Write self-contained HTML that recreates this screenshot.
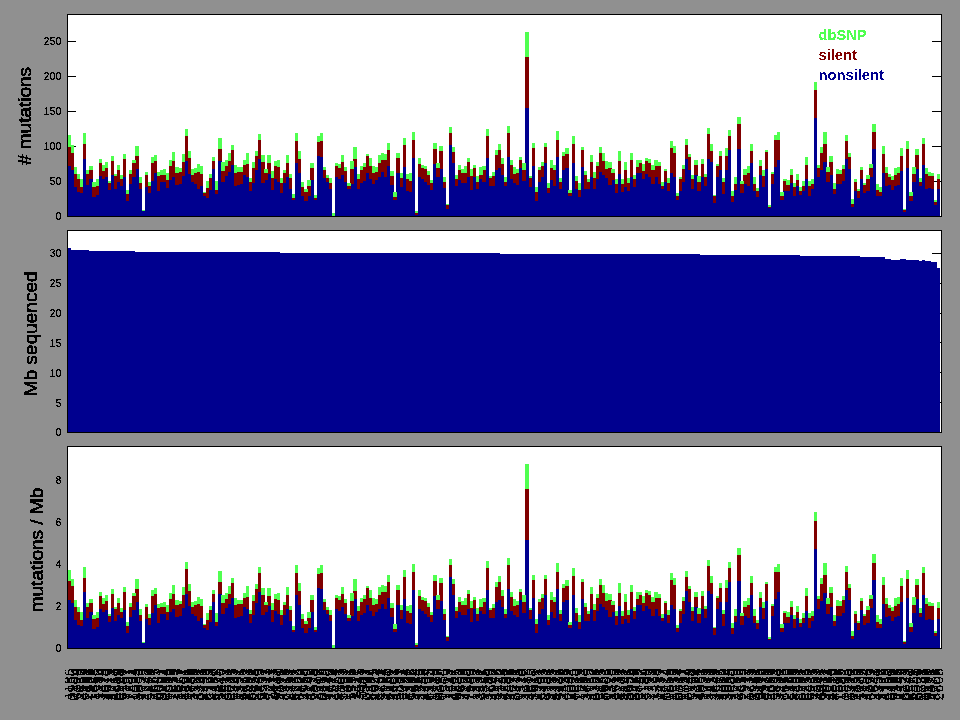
<!DOCTYPE html><html><head><meta charset="utf-8"><title>mutation rates</title>
<style>html,body{margin:0;padding:0;background:#909090;overflow:hidden}svg{display:block}text{font-family:"Liberation Sans",Arial,Helvetica,sans-serif;fill:#000;filter:url(#al)}.t{font-size:10px;letter-spacing:0.4385px;text-anchor:end;filter:url(#al2)}.yl{font-size:19px;text-anchor:middle;stroke:#000;stroke-width:0.5px}.lg{font-size:14.7px;font-weight:bold}.xl{font-size:14px;letter-spacing:0.35px;text-anchor:end;filter:url(#al)}</style></head><body>
<svg width="960" height="720" viewBox="0 0 960 720" shape-rendering="crispEdges">
<rect x="0" y="0" width="960" height="720" fill="#909090"/>
<rect x="67" y="14" width="875" height="203" fill="#fff"/>
<rect x="67" y="181" width="9" height="1" fill="#000"/>
<rect x="932" y="181" width="10" height="1" fill="#000"/>
<rect x="67" y="146" width="9" height="1" fill="#000"/>
<rect x="932" y="146" width="10" height="1" fill="#000"/>
<rect x="67" y="111" width="9" height="1" fill="#000"/>
<rect x="932" y="111" width="10" height="1" fill="#000"/>
<rect x="67" y="76" width="9" height="1" fill="#000"/>
<rect x="932" y="76" width="10" height="1" fill="#000"/>
<rect x="67" y="41" width="9" height="1" fill="#000"/>
<rect x="932" y="41" width="10" height="1" fill="#000"/>
<rect x="68" y="166" width="3" height="50" fill="#00008f"/>
<rect x="71" y="170" width="3" height="46" fill="#00008f"/>
<rect x="74" y="187" width="3" height="29" fill="#00008f"/>
<rect x="77" y="192" width="3" height="24" fill="#00008f"/>
<rect x="80" y="193" width="3" height="23" fill="#00008f"/>
<rect x="83" y="159" width="3" height="57" fill="#00008f"/>
<rect x="86" y="185" width="3" height="31" fill="#00008f"/>
<rect x="89" y="179" width="4" height="37" fill="#00008f"/>
<rect x="92" y="197" width="4" height="19" fill="#00008f"/>
<rect x="96" y="195" width="3" height="21" fill="#00008f"/>
<rect x="99" y="176" width="3" height="40" fill="#00008f"/>
<rect x="102" y="179" width="3" height="37" fill="#00008f"/>
<rect x="105" y="177" width="3" height="39" fill="#00008f"/>
<rect x="108" y="190" width="3" height="26" fill="#00008f"/>
<rect x="111" y="175" width="3" height="41" fill="#00008f"/>
<rect x="114" y="189" width="3" height="27" fill="#00008f"/>
<rect x="117" y="182" width="3" height="34" fill="#00008f"/>
<rect x="120" y="186" width="3" height="30" fill="#00008f"/>
<rect x="123" y="177" width="3" height="39" fill="#00008f"/>
<rect x="126" y="201" width="3" height="15" fill="#00008f"/>
<rect x="129" y="184" width="3" height="32" fill="#00008f"/>
<rect x="132" y="177" width="4" height="39" fill="#00008f"/>
<rect x="135" y="169" width="4" height="47" fill="#00008f"/>
<rect x="139" y="189" width="3" height="27" fill="#00008f"/>
<rect x="142" y="211" width="3" height="5" fill="#00008f"/>
<rect x="145" y="187" width="3" height="29" fill="#00008f"/>
<rect x="148" y="193" width="3" height="23" fill="#00008f"/>
<rect x="151" y="181" width="3" height="35" fill="#00008f"/>
<rect x="154" y="173" width="3" height="43" fill="#00008f"/>
<rect x="157" y="191" width="3" height="25" fill="#00008f"/>
<rect x="160" y="182" width="3" height="34" fill="#00008f"/>
<rect x="163" y="182" width="3" height="34" fill="#00008f"/>
<rect x="166" y="188" width="3" height="28" fill="#00008f"/>
<rect x="169" y="180" width="3" height="36" fill="#00008f"/>
<rect x="172" y="177" width="3" height="39" fill="#00008f"/>
<rect x="175" y="185" width="4" height="31" fill="#00008f"/>
<rect x="178" y="184" width="4" height="32" fill="#00008f"/>
<rect x="182" y="176" width="3" height="40" fill="#00008f"/>
<rect x="185" y="161" width="3" height="55" fill="#00008f"/>
<rect x="188" y="174" width="3" height="42" fill="#00008f"/>
<rect x="191" y="182" width="3" height="34" fill="#00008f"/>
<rect x="194" y="184" width="3" height="32" fill="#00008f"/>
<rect x="197" y="189" width="3" height="27" fill="#00008f"/>
<rect x="200" y="186" width="3" height="30" fill="#00008f"/>
<rect x="203" y="196" width="3" height="20" fill="#00008f"/>
<rect x="206" y="198" width="3" height="18" fill="#00008f"/>
<rect x="209" y="190" width="3" height="26" fill="#00008f"/>
<rect x="212" y="169" width="3" height="47" fill="#00008f"/>
<rect x="215" y="194" width="3" height="22" fill="#00008f"/>
<rect x="218" y="161" width="4" height="55" fill="#00008f"/>
<rect x="221" y="182" width="4" height="34" fill="#00008f"/>
<rect x="225" y="176" width="3" height="40" fill="#00008f"/>
<rect x="228" y="172" width="3" height="44" fill="#00008f"/>
<rect x="231" y="165" width="3" height="51" fill="#00008f"/>
<rect x="234" y="186" width="3" height="30" fill="#00008f"/>
<rect x="237" y="185" width="3" height="31" fill="#00008f"/>
<rect x="240" y="184" width="3" height="32" fill="#00008f"/>
<rect x="243" y="175" width="3" height="41" fill="#00008f"/>
<rect x="246" y="177" width="3" height="39" fill="#00008f"/>
<rect x="249" y="191" width="3" height="25" fill="#00008f"/>
<rect x="252" y="183" width="3" height="33" fill="#00008f"/>
<rect x="255" y="170" width="3" height="46" fill="#00008f"/>
<rect x="258" y="159" width="3" height="57" fill="#00008f"/>
<rect x="261" y="183" width="4" height="33" fill="#00008f"/>
<rect x="264" y="180" width="4" height="36" fill="#00008f"/>
<rect x="267" y="174" width="4" height="42" fill="#00008f"/>
<rect x="271" y="190" width="3" height="26" fill="#00008f"/>
<rect x="274" y="179" width="3" height="37" fill="#00008f"/>
<rect x="277" y="182" width="3" height="34" fill="#00008f"/>
<rect x="280" y="193" width="3" height="23" fill="#00008f"/>
<rect x="283" y="183" width="3" height="33" fill="#00008f"/>
<rect x="286" y="177" width="3" height="39" fill="#00008f"/>
<rect x="289" y="189" width="3" height="27" fill="#00008f"/>
<rect x="292" y="200" width="3" height="16" fill="#00008f"/>
<rect x="295" y="163" width="3" height="53" fill="#00008f"/>
<rect x="298" y="173" width="3" height="43" fill="#00008f"/>
<rect x="301" y="196" width="3" height="20" fill="#00008f"/>
<rect x="304" y="201" width="4" height="15" fill="#00008f"/>
<rect x="307" y="196" width="4" height="20" fill="#00008f"/>
<rect x="310" y="180" width="4" height="36" fill="#00008f"/>
<rect x="314" y="200" width="3" height="16" fill="#00008f"/>
<rect x="317" y="156" width="3" height="60" fill="#00008f"/>
<rect x="320" y="157" width="3" height="59" fill="#00008f"/>
<rect x="323" y="178" width="3" height="38" fill="#00008f"/>
<rect x="326" y="182" width="3" height="34" fill="#00008f"/>
<rect x="329" y="189" width="3" height="27" fill="#00008f"/>
<rect x="335" y="177" width="3" height="39" fill="#00008f"/>
<rect x="338" y="179" width="3" height="37" fill="#00008f"/>
<rect x="341" y="175" width="3" height="41" fill="#00008f"/>
<rect x="344" y="182" width="3" height="34" fill="#00008f"/>
<rect x="347" y="189" width="4" height="27" fill="#00008f"/>
<rect x="350" y="184" width="4" height="32" fill="#00008f"/>
<rect x="353" y="167" width="4" height="49" fill="#00008f"/>
<rect x="357" y="189" width="3" height="27" fill="#00008f"/>
<rect x="360" y="183" width="3" height="33" fill="#00008f"/>
<rect x="363" y="181" width="3" height="35" fill="#00008f"/>
<rect x="366" y="173" width="3" height="43" fill="#00008f"/>
<rect x="369" y="179" width="3" height="37" fill="#00008f"/>
<rect x="372" y="184" width="3" height="32" fill="#00008f"/>
<rect x="375" y="180" width="3" height="36" fill="#00008f"/>
<rect x="378" y="177" width="3" height="39" fill="#00008f"/>
<rect x="381" y="172" width="3" height="44" fill="#00008f"/>
<rect x="384" y="177" width="3" height="39" fill="#00008f"/>
<rect x="387" y="166" width="3" height="50" fill="#00008f"/>
<rect x="390" y="185" width="4" height="31" fill="#00008f"/>
<rect x="393" y="200" width="4" height="16" fill="#00008f"/>
<rect x="396" y="173" width="4" height="43" fill="#00008f"/>
<rect x="400" y="187" width="3" height="29" fill="#00008f"/>
<rect x="403" y="167" width="3" height="49" fill="#00008f"/>
<rect x="406" y="191" width="3" height="25" fill="#00008f"/>
<rect x="409" y="192" width="3" height="24" fill="#00008f"/>
<rect x="412" y="158" width="3" height="58" fill="#00008f"/>
<rect x="415" y="215" width="3" height="1" fill="#00008f"/>
<rect x="418" y="177" width="3" height="39" fill="#00008f"/>
<rect x="421" y="179" width="3" height="37" fill="#00008f"/>
<rect x="424" y="182" width="3" height="34" fill="#00008f"/>
<rect x="427" y="185" width="3" height="31" fill="#00008f"/>
<rect x="430" y="190" width="3" height="26" fill="#00008f"/>
<rect x="433" y="164" width="4" height="52" fill="#00008f"/>
<rect x="436" y="177" width="4" height="39" fill="#00008f"/>
<rect x="439" y="169" width="4" height="47" fill="#00008f"/>
<rect x="443" y="188" width="3" height="28" fill="#00008f"/>
<rect x="446" y="209" width="3" height="7" fill="#00008f"/>
<rect x="449" y="145" width="3" height="71" fill="#00008f"/>
<rect x="452" y="163" width="3" height="53" fill="#00008f"/>
<rect x="455" y="186" width="3" height="30" fill="#00008f"/>
<rect x="458" y="180" width="3" height="36" fill="#00008f"/>
<rect x="461" y="183" width="3" height="33" fill="#00008f"/>
<rect x="464" y="183" width="3" height="33" fill="#00008f"/>
<rect x="467" y="177" width="3" height="39" fill="#00008f"/>
<rect x="470" y="190" width="3" height="26" fill="#00008f"/>
<rect x="473" y="177" width="3" height="39" fill="#00008f"/>
<rect x="476" y="189" width="3" height="27" fill="#00008f"/>
<rect x="479" y="179" width="4" height="37" fill="#00008f"/>
<rect x="482" y="182" width="4" height="34" fill="#00008f"/>
<rect x="486" y="158" width="3" height="58" fill="#00008f"/>
<rect x="489" y="186" width="3" height="30" fill="#00008f"/>
<rect x="492" y="186" width="3" height="30" fill="#00008f"/>
<rect x="495" y="170" width="3" height="46" fill="#00008f"/>
<rect x="498" y="168" width="3" height="48" fill="#00008f"/>
<rect x="501" y="175" width="3" height="41" fill="#00008f"/>
<rect x="504" y="186" width="3" height="30" fill="#00008f"/>
<rect x="507" y="157" width="3" height="59" fill="#00008f"/>
<rect x="510" y="179" width="3" height="37" fill="#00008f"/>
<rect x="513" y="183" width="3" height="33" fill="#00008f"/>
<rect x="516" y="185" width="3" height="31" fill="#00008f"/>
<rect x="519" y="168" width="3" height="48" fill="#00008f"/>
<rect x="522" y="181" width="4" height="35" fill="#00008f"/>
<rect x="525" y="108" width="4" height="108" fill="#00008f"/>
<rect x="529" y="187" width="3" height="29" fill="#00008f"/>
<rect x="532" y="166" width="3" height="50" fill="#00008f"/>
<rect x="535" y="201" width="3" height="15" fill="#00008f"/>
<rect x="538" y="182" width="3" height="34" fill="#00008f"/>
<rect x="541" y="177" width="3" height="39" fill="#00008f"/>
<rect x="544" y="163" width="3" height="53" fill="#00008f"/>
<rect x="547" y="193" width="3" height="23" fill="#00008f"/>
<rect x="550" y="180" width="3" height="36" fill="#00008f"/>
<rect x="553" y="186" width="3" height="30" fill="#00008f"/>
<rect x="556" y="157" width="3" height="59" fill="#00008f"/>
<rect x="559" y="189" width="3" height="27" fill="#00008f"/>
<rect x="562" y="170" width="3" height="46" fill="#00008f"/>
<rect x="565" y="168" width="4" height="48" fill="#00008f"/>
<rect x="568" y="196" width="4" height="20" fill="#00008f"/>
<rect x="572" y="163" width="3" height="53" fill="#00008f"/>
<rect x="575" y="189" width="3" height="27" fill="#00008f"/>
<rect x="578" y="197" width="3" height="19" fill="#00008f"/>
<rect x="581" y="167" width="3" height="49" fill="#00008f"/>
<rect x="584" y="189" width="3" height="27" fill="#00008f"/>
<rect x="587" y="189" width="3" height="27" fill="#00008f"/>
<rect x="590" y="177" width="3" height="39" fill="#00008f"/>
<rect x="593" y="189" width="3" height="27" fill="#00008f"/>
<rect x="596" y="179" width="3" height="37" fill="#00008f"/>
<rect x="599" y="172" width="3" height="44" fill="#00008f"/>
<rect x="602" y="175" width="3" height="41" fill="#00008f"/>
<rect x="605" y="178" width="3" height="38" fill="#00008f"/>
<rect x="608" y="185" width="4" height="31" fill="#00008f"/>
<rect x="611" y="180" width="4" height="36" fill="#00008f"/>
<rect x="615" y="193" width="3" height="23" fill="#00008f"/>
<rect x="618" y="174" width="3" height="42" fill="#00008f"/>
<rect x="621" y="192" width="3" height="24" fill="#00008f"/>
<rect x="624" y="187" width="3" height="29" fill="#00008f"/>
<rect x="627" y="191" width="3" height="25" fill="#00008f"/>
<rect x="630" y="177" width="3" height="39" fill="#00008f"/>
<rect x="633" y="187" width="3" height="29" fill="#00008f"/>
<rect x="636" y="173" width="3" height="43" fill="#00008f"/>
<rect x="639" y="173" width="3" height="43" fill="#00008f"/>
<rect x="642" y="179" width="3" height="37" fill="#00008f"/>
<rect x="645" y="174" width="3" height="42" fill="#00008f"/>
<rect x="648" y="177" width="3" height="39" fill="#00008f"/>
<rect x="651" y="184" width="4" height="32" fill="#00008f"/>
<rect x="654" y="177" width="4" height="39" fill="#00008f"/>
<rect x="658" y="184" width="3" height="32" fill="#00008f"/>
<rect x="661" y="189" width="3" height="27" fill="#00008f"/>
<rect x="664" y="182" width="3" height="34" fill="#00008f"/>
<rect x="667" y="191" width="3" height="25" fill="#00008f"/>
<rect x="670" y="173" width="3" height="43" fill="#00008f"/>
<rect x="673" y="177" width="3" height="39" fill="#00008f"/>
<rect x="676" y="200" width="3" height="16" fill="#00008f"/>
<rect x="679" y="191" width="3" height="25" fill="#00008f"/>
<rect x="682" y="182" width="3" height="34" fill="#00008f"/>
<rect x="685" y="159" width="3" height="57" fill="#00008f"/>
<rect x="688" y="170" width="3" height="46" fill="#00008f"/>
<rect x="691" y="189" width="3" height="27" fill="#00008f"/>
<rect x="694" y="175" width="4" height="41" fill="#00008f"/>
<rect x="697" y="191" width="4" height="25" fill="#00008f"/>
<rect x="701" y="177" width="3" height="39" fill="#00008f"/>
<rect x="704" y="186" width="3" height="30" fill="#00008f"/>
<rect x="707" y="159" width="3" height="57" fill="#00008f"/>
<rect x="710" y="162" width="3" height="54" fill="#00008f"/>
<rect x="713" y="203" width="3" height="13" fill="#00008f"/>
<rect x="716" y="177" width="3" height="39" fill="#00008f"/>
<rect x="719" y="170" width="3" height="46" fill="#00008f"/>
<rect x="722" y="194" width="3" height="22" fill="#00008f"/>
<rect x="725" y="170" width="3" height="46" fill="#00008f"/>
<rect x="728" y="150" width="3" height="66" fill="#00008f"/>
<rect x="731" y="202" width="3" height="14" fill="#00008f"/>
<rect x="734" y="190" width="3" height="26" fill="#00008f"/>
<rect x="737" y="149" width="4" height="67" fill="#00008f"/>
<rect x="740" y="193" width="4" height="23" fill="#00008f"/>
<rect x="743" y="184" width="4" height="32" fill="#00008f"/>
<rect x="747" y="186" width="3" height="30" fill="#00008f"/>
<rect x="750" y="163" width="3" height="53" fill="#00008f"/>
<rect x="753" y="191" width="3" height="25" fill="#00008f"/>
<rect x="756" y="197" width="3" height="19" fill="#00008f"/>
<rect x="759" y="175" width="3" height="41" fill="#00008f"/>
<rect x="762" y="187" width="3" height="29" fill="#00008f"/>
<rect x="765" y="169" width="3" height="47" fill="#00008f"/>
<rect x="768" y="208" width="3" height="8" fill="#00008f"/>
<rect x="771" y="184" width="3" height="32" fill="#00008f"/>
<rect x="774" y="167" width="3" height="49" fill="#00008f"/>
<rect x="777" y="160" width="3" height="56" fill="#00008f"/>
<rect x="780" y="200" width="4" height="16" fill="#00008f"/>
<rect x="783" y="191" width="4" height="25" fill="#00008f"/>
<rect x="786" y="191" width="4" height="25" fill="#00008f"/>
<rect x="790" y="183" width="3" height="33" fill="#00008f"/>
<rect x="793" y="196" width="3" height="20" fill="#00008f"/>
<rect x="796" y="186" width="3" height="30" fill="#00008f"/>
<rect x="799" y="195" width="3" height="21" fill="#00008f"/>
<rect x="802" y="191" width="3" height="25" fill="#00008f"/>
<rect x="805" y="179" width="3" height="37" fill="#00008f"/>
<rect x="808" y="196" width="3" height="20" fill="#00008f"/>
<rect x="811" y="189" width="3" height="27" fill="#00008f"/>
<rect x="814" y="118" width="3" height="98" fill="#00008f"/>
<rect x="817" y="177" width="3" height="39" fill="#00008f"/>
<rect x="820" y="170" width="3" height="46" fill="#00008f"/>
<rect x="823" y="162" width="4" height="54" fill="#00008f"/>
<rect x="826" y="182" width="4" height="34" fill="#00008f"/>
<rect x="829" y="175" width="4" height="41" fill="#00008f"/>
<rect x="833" y="194" width="3" height="22" fill="#00008f"/>
<rect x="836" y="184" width="3" height="32" fill="#00008f"/>
<rect x="839" y="184" width="3" height="32" fill="#00008f"/>
<rect x="842" y="181" width="3" height="35" fill="#00008f"/>
<rect x="845" y="159" width="3" height="57" fill="#00008f"/>
<rect x="848" y="169" width="3" height="47" fill="#00008f"/>
<rect x="851" y="207" width="3" height="9" fill="#00008f"/>
<rect x="854" y="191" width="3" height="25" fill="#00008f"/>
<rect x="857" y="198" width="3" height="18" fill="#00008f"/>
<rect x="860" y="179" width="3" height="37" fill="#00008f"/>
<rect x="863" y="193" width="3" height="23" fill="#00008f"/>
<rect x="866" y="191" width="4" height="25" fill="#00008f"/>
<rect x="869" y="177" width="4" height="39" fill="#00008f"/>
<rect x="872" y="149" width="4" height="67" fill="#00008f"/>
<rect x="876" y="196" width="3" height="20" fill="#00008f"/>
<rect x="879" y="196" width="3" height="20" fill="#00008f"/>
<rect x="882" y="173" width="3" height="43" fill="#00008f"/>
<rect x="885" y="186" width="3" height="30" fill="#00008f"/>
<rect x="888" y="185" width="3" height="31" fill="#00008f"/>
<rect x="891" y="190" width="3" height="26" fill="#00008f"/>
<rect x="894" y="186" width="3" height="30" fill="#00008f"/>
<rect x="897" y="185" width="3" height="31" fill="#00008f"/>
<rect x="900" y="171" width="3" height="45" fill="#00008f"/>
<rect x="903" y="212" width="3" height="4" fill="#00008f"/>
<rect x="906" y="168" width="3" height="48" fill="#00008f"/>
<rect x="909" y="201" width="4" height="15" fill="#00008f"/>
<rect x="912" y="182" width="4" height="34" fill="#00008f"/>
<rect x="915" y="169" width="4" height="47" fill="#00008f"/>
<rect x="919" y="186" width="3" height="30" fill="#00008f"/>
<rect x="922" y="165" width="3" height="51" fill="#00008f"/>
<rect x="925" y="189" width="3" height="27" fill="#00008f"/>
<rect x="928" y="188" width="3" height="28" fill="#00008f"/>
<rect x="931" y="189" width="3" height="27" fill="#00008f"/>
<rect x="934" y="205" width="3" height="11" fill="#00008f"/>
<rect x="937" y="189" width="3" height="27" fill="#00008f"/>
<rect x="68" y="147" width="3" height="19" fill="#800000"/>
<rect x="71" y="153" width="3" height="17" fill="#800000"/>
<rect x="74" y="174" width="3" height="13" fill="#800000"/>
<rect x="77" y="179" width="3" height="13" fill="#800000"/>
<rect x="80" y="187" width="3" height="6" fill="#800000"/>
<rect x="83" y="144" width="3" height="15" fill="#800000"/>
<rect x="86" y="174" width="3" height="11" fill="#800000"/>
<rect x="89" y="170" width="4" height="9" fill="#800000"/>
<rect x="92" y="187" width="4" height="10" fill="#800000"/>
<rect x="96" y="186" width="3" height="9" fill="#800000"/>
<rect x="99" y="163" width="3" height="13" fill="#800000"/>
<rect x="102" y="171" width="3" height="8" fill="#800000"/>
<rect x="105" y="168" width="3" height="9" fill="#800000"/>
<rect x="108" y="183" width="3" height="7" fill="#800000"/>
<rect x="111" y="161" width="3" height="14" fill="#800000"/>
<rect x="114" y="176" width="3" height="13" fill="#800000"/>
<rect x="117" y="170" width="3" height="12" fill="#800000"/>
<rect x="120" y="179" width="3" height="7" fill="#800000"/>
<rect x="123" y="159" width="3" height="18" fill="#800000"/>
<rect x="126" y="194" width="3" height="7" fill="#800000"/>
<rect x="129" y="174" width="3" height="10" fill="#800000"/>
<rect x="132" y="163" width="4" height="14" fill="#800000"/>
<rect x="135" y="156" width="4" height="13" fill="#800000"/>
<rect x="139" y="183" width="3" height="6" fill="#800000"/>
<rect x="145" y="175" width="3" height="12" fill="#800000"/>
<rect x="148" y="186" width="3" height="7" fill="#800000"/>
<rect x="151" y="163" width="3" height="18" fill="#800000"/>
<rect x="154" y="161" width="3" height="12" fill="#800000"/>
<rect x="157" y="176" width="3" height="15" fill="#800000"/>
<rect x="160" y="175" width="3" height="7" fill="#800000"/>
<rect x="163" y="175" width="3" height="7" fill="#800000"/>
<rect x="166" y="180" width="3" height="8" fill="#800000"/>
<rect x="169" y="166" width="3" height="14" fill="#800000"/>
<rect x="172" y="161" width="3" height="16" fill="#800000"/>
<rect x="175" y="173" width="4" height="12" fill="#800000"/>
<rect x="178" y="172" width="4" height="12" fill="#800000"/>
<rect x="182" y="162" width="3" height="14" fill="#800000"/>
<rect x="185" y="136" width="3" height="25" fill="#800000"/>
<rect x="188" y="158" width="3" height="16" fill="#800000"/>
<rect x="191" y="175" width="3" height="7" fill="#800000"/>
<rect x="194" y="173" width="3" height="11" fill="#800000"/>
<rect x="197" y="172" width="3" height="17" fill="#800000"/>
<rect x="200" y="174" width="3" height="12" fill="#800000"/>
<rect x="203" y="193" width="3" height="3" fill="#800000"/>
<rect x="206" y="188" width="3" height="10" fill="#800000"/>
<rect x="209" y="178" width="3" height="12" fill="#800000"/>
<rect x="212" y="161" width="3" height="8" fill="#800000"/>
<rect x="215" y="190" width="3" height="4" fill="#800000"/>
<rect x="218" y="149" width="4" height="12" fill="#800000"/>
<rect x="221" y="171" width="4" height="11" fill="#800000"/>
<rect x="225" y="166" width="3" height="10" fill="#800000"/>
<rect x="228" y="161" width="3" height="11" fill="#800000"/>
<rect x="231" y="150" width="3" height="15" fill="#800000"/>
<rect x="234" y="173" width="3" height="13" fill="#800000"/>
<rect x="237" y="172" width="3" height="13" fill="#800000"/>
<rect x="240" y="172" width="3" height="12" fill="#800000"/>
<rect x="243" y="165" width="3" height="10" fill="#800000"/>
<rect x="246" y="164" width="3" height="13" fill="#800000"/>
<rect x="249" y="182" width="3" height="9" fill="#800000"/>
<rect x="252" y="168" width="3" height="15" fill="#800000"/>
<rect x="255" y="156" width="3" height="14" fill="#800000"/>
<rect x="258" y="140" width="3" height="19" fill="#800000"/>
<rect x="261" y="162" width="4" height="21" fill="#800000"/>
<rect x="264" y="173" width="4" height="7" fill="#800000"/>
<rect x="267" y="163" width="4" height="11" fill="#800000"/>
<rect x="271" y="178" width="3" height="12" fill="#800000"/>
<rect x="274" y="166" width="3" height="13" fill="#800000"/>
<rect x="277" y="167" width="3" height="15" fill="#800000"/>
<rect x="280" y="183" width="3" height="10" fill="#800000"/>
<rect x="283" y="173" width="3" height="10" fill="#800000"/>
<rect x="286" y="163" width="3" height="14" fill="#800000"/>
<rect x="289" y="178" width="3" height="11" fill="#800000"/>
<rect x="292" y="198" width="3" height="2" fill="#800000"/>
<rect x="295" y="141" width="3" height="22" fill="#800000"/>
<rect x="298" y="159" width="3" height="14" fill="#800000"/>
<rect x="301" y="187" width="3" height="9" fill="#800000"/>
<rect x="304" y="192" width="4" height="9" fill="#800000"/>
<rect x="307" y="186" width="4" height="10" fill="#800000"/>
<rect x="310" y="168" width="4" height="12" fill="#800000"/>
<rect x="314" y="198" width="3" height="2" fill="#800000"/>
<rect x="317" y="142" width="3" height="14" fill="#800000"/>
<rect x="320" y="141" width="3" height="16" fill="#800000"/>
<rect x="323" y="170" width="3" height="8" fill="#800000"/>
<rect x="326" y="178" width="3" height="4" fill="#800000"/>
<rect x="329" y="183" width="3" height="6" fill="#800000"/>
<rect x="335" y="166" width="3" height="11" fill="#800000"/>
<rect x="338" y="168" width="3" height="11" fill="#800000"/>
<rect x="341" y="162" width="3" height="13" fill="#800000"/>
<rect x="344" y="171" width="3" height="11" fill="#800000"/>
<rect x="347" y="186" width="4" height="3" fill="#800000"/>
<rect x="350" y="169" width="4" height="15" fill="#800000"/>
<rect x="353" y="159" width="4" height="8" fill="#800000"/>
<rect x="357" y="179" width="3" height="10" fill="#800000"/>
<rect x="360" y="170" width="3" height="13" fill="#800000"/>
<rect x="363" y="167" width="3" height="14" fill="#800000"/>
<rect x="366" y="156" width="3" height="17" fill="#800000"/>
<rect x="369" y="166" width="3" height="13" fill="#800000"/>
<rect x="372" y="173" width="3" height="11" fill="#800000"/>
<rect x="375" y="172" width="3" height="8" fill="#800000"/>
<rect x="378" y="163" width="3" height="14" fill="#800000"/>
<rect x="381" y="160" width="3" height="12" fill="#800000"/>
<rect x="384" y="160" width="3" height="17" fill="#800000"/>
<rect x="387" y="150" width="3" height="16" fill="#800000"/>
<rect x="390" y="176" width="4" height="9" fill="#800000"/>
<rect x="393" y="197" width="4" height="3" fill="#800000"/>
<rect x="396" y="158" width="4" height="15" fill="#800000"/>
<rect x="400" y="178" width="3" height="9" fill="#800000"/>
<rect x="403" y="145" width="3" height="22" fill="#800000"/>
<rect x="406" y="179" width="3" height="12" fill="#800000"/>
<rect x="409" y="181" width="3" height="11" fill="#800000"/>
<rect x="412" y="140" width="3" height="18" fill="#800000"/>
<rect x="415" y="213" width="3" height="2" fill="#800000"/>
<rect x="418" y="164" width="3" height="13" fill="#800000"/>
<rect x="421" y="168" width="3" height="11" fill="#800000"/>
<rect x="424" y="169" width="3" height="13" fill="#800000"/>
<rect x="427" y="175" width="3" height="10" fill="#800000"/>
<rect x="430" y="183" width="3" height="7" fill="#800000"/>
<rect x="433" y="149" width="4" height="15" fill="#800000"/>
<rect x="436" y="168" width="4" height="9" fill="#800000"/>
<rect x="439" y="151" width="4" height="18" fill="#800000"/>
<rect x="443" y="182" width="3" height="6" fill="#800000"/>
<rect x="446" y="205" width="3" height="4" fill="#800000"/>
<rect x="449" y="133" width="3" height="12" fill="#800000"/>
<rect x="452" y="152" width="3" height="11" fill="#800000"/>
<rect x="455" y="179" width="3" height="7" fill="#800000"/>
<rect x="458" y="170" width="3" height="10" fill="#800000"/>
<rect x="461" y="173" width="3" height="10" fill="#800000"/>
<rect x="464" y="173" width="3" height="10" fill="#800000"/>
<rect x="467" y="162" width="3" height="15" fill="#800000"/>
<rect x="470" y="176" width="3" height="14" fill="#800000"/>
<rect x="473" y="168" width="3" height="9" fill="#800000"/>
<rect x="476" y="182" width="3" height="7" fill="#800000"/>
<rect x="479" y="175" width="4" height="4" fill="#800000"/>
<rect x="482" y="170" width="4" height="12" fill="#800000"/>
<rect x="486" y="136" width="3" height="22" fill="#800000"/>
<rect x="489" y="178" width="3" height="8" fill="#800000"/>
<rect x="492" y="176" width="3" height="10" fill="#800000"/>
<rect x="495" y="155" width="3" height="15" fill="#800000"/>
<rect x="498" y="150" width="3" height="18" fill="#800000"/>
<rect x="501" y="164" width="3" height="11" fill="#800000"/>
<rect x="504" y="182" width="3" height="4" fill="#800000"/>
<rect x="507" y="133" width="3" height="24" fill="#800000"/>
<rect x="510" y="165" width="3" height="14" fill="#800000"/>
<rect x="513" y="174" width="3" height="9" fill="#800000"/>
<rect x="516" y="173" width="3" height="12" fill="#800000"/>
<rect x="519" y="160" width="3" height="8" fill="#800000"/>
<rect x="522" y="170" width="4" height="11" fill="#800000"/>
<rect x="525" y="57" width="4" height="51" fill="#800000"/>
<rect x="529" y="178" width="3" height="9" fill="#800000"/>
<rect x="532" y="148" width="3" height="18" fill="#800000"/>
<rect x="535" y="192" width="3" height="9" fill="#800000"/>
<rect x="538" y="170" width="3" height="12" fill="#800000"/>
<rect x="541" y="166" width="3" height="11" fill="#800000"/>
<rect x="544" y="147" width="3" height="16" fill="#800000"/>
<rect x="547" y="188" width="3" height="5" fill="#800000"/>
<rect x="550" y="168" width="3" height="12" fill="#800000"/>
<rect x="553" y="170" width="3" height="16" fill="#800000"/>
<rect x="556" y="140" width="3" height="17" fill="#800000"/>
<rect x="559" y="182" width="3" height="7" fill="#800000"/>
<rect x="562" y="156" width="3" height="14" fill="#800000"/>
<rect x="565" y="154" width="4" height="14" fill="#800000"/>
<rect x="568" y="193" width="4" height="3" fill="#800000"/>
<rect x="572" y="144" width="3" height="19" fill="#800000"/>
<rect x="575" y="181" width="3" height="8" fill="#800000"/>
<rect x="578" y="190" width="3" height="7" fill="#800000"/>
<rect x="581" y="150" width="3" height="17" fill="#800000"/>
<rect x="584" y="175" width="3" height="14" fill="#800000"/>
<rect x="587" y="182" width="3" height="7" fill="#800000"/>
<rect x="590" y="162" width="3" height="15" fill="#800000"/>
<rect x="593" y="178" width="3" height="11" fill="#800000"/>
<rect x="596" y="166" width="3" height="13" fill="#800000"/>
<rect x="599" y="153" width="3" height="19" fill="#800000"/>
<rect x="602" y="161" width="3" height="14" fill="#800000"/>
<rect x="605" y="169" width="3" height="9" fill="#800000"/>
<rect x="608" y="168" width="4" height="17" fill="#800000"/>
<rect x="611" y="173" width="4" height="7" fill="#800000"/>
<rect x="615" y="184" width="3" height="9" fill="#800000"/>
<rect x="618" y="161" width="3" height="13" fill="#800000"/>
<rect x="621" y="184" width="3" height="8" fill="#800000"/>
<rect x="624" y="170" width="3" height="17" fill="#800000"/>
<rect x="627" y="183" width="3" height="8" fill="#800000"/>
<rect x="630" y="160" width="3" height="17" fill="#800000"/>
<rect x="633" y="179" width="3" height="8" fill="#800000"/>
<rect x="636" y="167" width="3" height="6" fill="#800000"/>
<rect x="639" y="163" width="3" height="10" fill="#800000"/>
<rect x="642" y="171" width="3" height="8" fill="#800000"/>
<rect x="645" y="161" width="3" height="13" fill="#800000"/>
<rect x="648" y="163" width="3" height="14" fill="#800000"/>
<rect x="651" y="170" width="4" height="14" fill="#800000"/>
<rect x="654" y="166" width="4" height="11" fill="#800000"/>
<rect x="658" y="166" width="3" height="18" fill="#800000"/>
<rect x="661" y="186" width="3" height="3" fill="#800000"/>
<rect x="664" y="171" width="3" height="11" fill="#800000"/>
<rect x="667" y="183" width="3" height="8" fill="#800000"/>
<rect x="670" y="148" width="3" height="25" fill="#800000"/>
<rect x="673" y="153" width="3" height="24" fill="#800000"/>
<rect x="676" y="196" width="3" height="4" fill="#800000"/>
<rect x="679" y="179" width="3" height="12" fill="#800000"/>
<rect x="682" y="169" width="3" height="13" fill="#800000"/>
<rect x="685" y="145" width="3" height="14" fill="#800000"/>
<rect x="688" y="157" width="3" height="13" fill="#800000"/>
<rect x="691" y="179" width="3" height="10" fill="#800000"/>
<rect x="694" y="165" width="4" height="10" fill="#800000"/>
<rect x="697" y="182" width="4" height="9" fill="#800000"/>
<rect x="701" y="164" width="3" height="13" fill="#800000"/>
<rect x="704" y="177" width="3" height="9" fill="#800000"/>
<rect x="707" y="134" width="3" height="25" fill="#800000"/>
<rect x="710" y="151" width="3" height="11" fill="#800000"/>
<rect x="713" y="196" width="3" height="7" fill="#800000"/>
<rect x="716" y="166" width="3" height="11" fill="#800000"/>
<rect x="719" y="156" width="3" height="14" fill="#800000"/>
<rect x="722" y="182" width="3" height="12" fill="#800000"/>
<rect x="725" y="156" width="3" height="14" fill="#800000"/>
<rect x="728" y="136" width="3" height="14" fill="#800000"/>
<rect x="731" y="196" width="3" height="6" fill="#800000"/>
<rect x="734" y="184" width="3" height="6" fill="#800000"/>
<rect x="737" y="124" width="4" height="25" fill="#800000"/>
<rect x="740" y="184" width="4" height="9" fill="#800000"/>
<rect x="743" y="175" width="4" height="9" fill="#800000"/>
<rect x="747" y="173" width="3" height="13" fill="#800000"/>
<rect x="750" y="151" width="3" height="12" fill="#800000"/>
<rect x="753" y="184" width="3" height="7" fill="#800000"/>
<rect x="756" y="191" width="3" height="6" fill="#800000"/>
<rect x="759" y="166" width="3" height="9" fill="#800000"/>
<rect x="762" y="176" width="3" height="11" fill="#800000"/>
<rect x="765" y="152" width="3" height="17" fill="#800000"/>
<rect x="768" y="207" width="3" height="1" fill="#800000"/>
<rect x="771" y="174" width="3" height="10" fill="#800000"/>
<rect x="774" y="140" width="3" height="27" fill="#800000"/>
<rect x="777" y="140" width="3" height="20" fill="#800000"/>
<rect x="780" y="196" width="4" height="4" fill="#800000"/>
<rect x="783" y="181" width="4" height="10" fill="#800000"/>
<rect x="786" y="185" width="4" height="6" fill="#800000"/>
<rect x="790" y="175" width="3" height="8" fill="#800000"/>
<rect x="793" y="187" width="3" height="9" fill="#800000"/>
<rect x="796" y="180" width="3" height="6" fill="#800000"/>
<rect x="799" y="191" width="3" height="4" fill="#800000"/>
<rect x="802" y="186" width="3" height="5" fill="#800000"/>
<rect x="805" y="165" width="3" height="14" fill="#800000"/>
<rect x="808" y="186" width="3" height="10" fill="#800000"/>
<rect x="811" y="184" width="3" height="5" fill="#800000"/>
<rect x="814" y="90" width="3" height="28" fill="#800000"/>
<rect x="817" y="168" width="3" height="9" fill="#800000"/>
<rect x="820" y="153" width="3" height="17" fill="#800000"/>
<rect x="823" y="144" width="4" height="18" fill="#800000"/>
<rect x="826" y="172" width="4" height="10" fill="#800000"/>
<rect x="829" y="162" width="4" height="13" fill="#800000"/>
<rect x="833" y="189" width="3" height="5" fill="#800000"/>
<rect x="836" y="174" width="3" height="10" fill="#800000"/>
<rect x="839" y="174" width="3" height="10" fill="#800000"/>
<rect x="842" y="169" width="3" height="12" fill="#800000"/>
<rect x="845" y="141" width="3" height="18" fill="#800000"/>
<rect x="848" y="157" width="3" height="12" fill="#800000"/>
<rect x="851" y="204" width="3" height="3" fill="#800000"/>
<rect x="854" y="182" width="3" height="9" fill="#800000"/>
<rect x="857" y="191" width="3" height="7" fill="#800000"/>
<rect x="860" y="170" width="3" height="9" fill="#800000"/>
<rect x="863" y="185" width="3" height="8" fill="#800000"/>
<rect x="866" y="179" width="4" height="12" fill="#800000"/>
<rect x="869" y="168" width="4" height="9" fill="#800000"/>
<rect x="872" y="132" width="4" height="17" fill="#800000"/>
<rect x="876" y="190" width="3" height="6" fill="#800000"/>
<rect x="879" y="192" width="3" height="4" fill="#800000"/>
<rect x="882" y="154" width="3" height="19" fill="#800000"/>
<rect x="885" y="173" width="3" height="13" fill="#800000"/>
<rect x="888" y="177" width="3" height="8" fill="#800000"/>
<rect x="891" y="180" width="3" height="10" fill="#800000"/>
<rect x="894" y="175" width="3" height="11" fill="#800000"/>
<rect x="897" y="173" width="3" height="12" fill="#800000"/>
<rect x="900" y="156" width="3" height="15" fill="#800000"/>
<rect x="903" y="210" width="3" height="2" fill="#800000"/>
<rect x="906" y="149" width="3" height="19" fill="#800000"/>
<rect x="909" y="196" width="4" height="5" fill="#800000"/>
<rect x="912" y="174" width="4" height="8" fill="#800000"/>
<rect x="915" y="155" width="4" height="14" fill="#800000"/>
<rect x="919" y="182" width="3" height="4" fill="#800000"/>
<rect x="922" y="144" width="3" height="21" fill="#800000"/>
<rect x="925" y="174" width="3" height="15" fill="#800000"/>
<rect x="928" y="176" width="3" height="12" fill="#800000"/>
<rect x="931" y="176" width="3" height="13" fill="#800000"/>
<rect x="934" y="202" width="3" height="3" fill="#800000"/>
<rect x="937" y="179" width="3" height="10" fill="#800000"/>
<rect x="68" y="135" width="3" height="12" fill="#50ff50"/>
<rect x="71" y="145" width="3" height="8" fill="#50ff50"/>
<rect x="74" y="167" width="3" height="7" fill="#50ff50"/>
<rect x="77" y="174" width="3" height="5" fill="#50ff50"/>
<rect x="80" y="179" width="3" height="8" fill="#50ff50"/>
<rect x="83" y="133" width="3" height="11" fill="#50ff50"/>
<rect x="86" y="170" width="3" height="4" fill="#50ff50"/>
<rect x="89" y="166" width="4" height="4" fill="#50ff50"/>
<rect x="92" y="182" width="4" height="5" fill="#50ff50"/>
<rect x="96" y="179" width="3" height="7" fill="#50ff50"/>
<rect x="99" y="159" width="3" height="4" fill="#50ff50"/>
<rect x="102" y="165" width="3" height="6" fill="#50ff50"/>
<rect x="105" y="162" width="3" height="6" fill="#50ff50"/>
<rect x="108" y="181" width="3" height="2" fill="#50ff50"/>
<rect x="111" y="156" width="3" height="5" fill="#50ff50"/>
<rect x="114" y="174" width="3" height="2" fill="#50ff50"/>
<rect x="117" y="165" width="3" height="5" fill="#50ff50"/>
<rect x="120" y="175" width="3" height="4" fill="#50ff50"/>
<rect x="123" y="154" width="3" height="5" fill="#50ff50"/>
<rect x="126" y="190" width="3" height="4" fill="#50ff50"/>
<rect x="129" y="170" width="3" height="4" fill="#50ff50"/>
<rect x="132" y="160" width="4" height="3" fill="#50ff50"/>
<rect x="135" y="146" width="4" height="10" fill="#50ff50"/>
<rect x="139" y="177" width="3" height="6" fill="#50ff50"/>
<rect x="142" y="210" width="3" height="1" fill="#50ff50"/>
<rect x="145" y="172" width="3" height="3" fill="#50ff50"/>
<rect x="148" y="182" width="3" height="4" fill="#50ff50"/>
<rect x="151" y="157" width="3" height="6" fill="#50ff50"/>
<rect x="154" y="155" width="3" height="6" fill="#50ff50"/>
<rect x="157" y="172" width="3" height="4" fill="#50ff50"/>
<rect x="160" y="170" width="3" height="5" fill="#50ff50"/>
<rect x="163" y="169" width="3" height="6" fill="#50ff50"/>
<rect x="166" y="173" width="3" height="7" fill="#50ff50"/>
<rect x="169" y="160" width="3" height="6" fill="#50ff50"/>
<rect x="172" y="152" width="3" height="9" fill="#50ff50"/>
<rect x="175" y="167" width="4" height="6" fill="#50ff50"/>
<rect x="178" y="168" width="4" height="4" fill="#50ff50"/>
<rect x="182" y="154" width="3" height="8" fill="#50ff50"/>
<rect x="185" y="129" width="3" height="7" fill="#50ff50"/>
<rect x="188" y="151" width="3" height="7" fill="#50ff50"/>
<rect x="191" y="169" width="3" height="6" fill="#50ff50"/>
<rect x="194" y="168" width="3" height="5" fill="#50ff50"/>
<rect x="197" y="164" width="3" height="8" fill="#50ff50"/>
<rect x="200" y="166" width="3" height="8" fill="#50ff50"/>
<rect x="203" y="192" width="3" height="1" fill="#50ff50"/>
<rect x="206" y="181" width="3" height="7" fill="#50ff50"/>
<rect x="209" y="174" width="3" height="4" fill="#50ff50"/>
<rect x="212" y="157" width="3" height="4" fill="#50ff50"/>
<rect x="215" y="181" width="3" height="9" fill="#50ff50"/>
<rect x="218" y="138" width="4" height="11" fill="#50ff50"/>
<rect x="221" y="162" width="4" height="9" fill="#50ff50"/>
<rect x="225" y="160" width="3" height="6" fill="#50ff50"/>
<rect x="228" y="153" width="3" height="8" fill="#50ff50"/>
<rect x="231" y="145" width="3" height="5" fill="#50ff50"/>
<rect x="234" y="165" width="3" height="8" fill="#50ff50"/>
<rect x="237" y="167" width="3" height="5" fill="#50ff50"/>
<rect x="240" y="167" width="3" height="5" fill="#50ff50"/>
<rect x="243" y="160" width="3" height="5" fill="#50ff50"/>
<rect x="246" y="153" width="3" height="11" fill="#50ff50"/>
<rect x="249" y="178" width="3" height="4" fill="#50ff50"/>
<rect x="252" y="162" width="3" height="6" fill="#50ff50"/>
<rect x="255" y="151" width="3" height="5" fill="#50ff50"/>
<rect x="258" y="134" width="3" height="6" fill="#50ff50"/>
<rect x="261" y="155" width="4" height="7" fill="#50ff50"/>
<rect x="264" y="169" width="4" height="4" fill="#50ff50"/>
<rect x="267" y="155" width="4" height="8" fill="#50ff50"/>
<rect x="271" y="171" width="3" height="7" fill="#50ff50"/>
<rect x="274" y="161" width="3" height="5" fill="#50ff50"/>
<rect x="277" y="160" width="3" height="7" fill="#50ff50"/>
<rect x="280" y="178" width="3" height="5" fill="#50ff50"/>
<rect x="283" y="170" width="3" height="3" fill="#50ff50"/>
<rect x="286" y="155" width="3" height="8" fill="#50ff50"/>
<rect x="289" y="174" width="3" height="4" fill="#50ff50"/>
<rect x="292" y="194" width="3" height="4" fill="#50ff50"/>
<rect x="295" y="133" width="3" height="8" fill="#50ff50"/>
<rect x="298" y="151" width="3" height="8" fill="#50ff50"/>
<rect x="301" y="182" width="3" height="5" fill="#50ff50"/>
<rect x="304" y="189" width="4" height="3" fill="#50ff50"/>
<rect x="307" y="180" width="4" height="6" fill="#50ff50"/>
<rect x="310" y="163" width="4" height="5" fill="#50ff50"/>
<rect x="314" y="195" width="3" height="3" fill="#50ff50"/>
<rect x="317" y="136" width="3" height="6" fill="#50ff50"/>
<rect x="320" y="133" width="3" height="8" fill="#50ff50"/>
<rect x="323" y="167" width="3" height="3" fill="#50ff50"/>
<rect x="326" y="175" width="3" height="3" fill="#50ff50"/>
<rect x="329" y="178" width="3" height="5" fill="#50ff50"/>
<rect x="332" y="213" width="3" height="3" fill="#50ff50"/>
<rect x="335" y="163" width="3" height="3" fill="#50ff50"/>
<rect x="338" y="164" width="3" height="4" fill="#50ff50"/>
<rect x="341" y="155" width="3" height="7" fill="#50ff50"/>
<rect x="344" y="167" width="3" height="4" fill="#50ff50"/>
<rect x="347" y="183" width="4" height="3" fill="#50ff50"/>
<rect x="350" y="161" width="4" height="8" fill="#50ff50"/>
<rect x="353" y="147" width="4" height="12" fill="#50ff50"/>
<rect x="357" y="174" width="3" height="5" fill="#50ff50"/>
<rect x="360" y="166" width="3" height="4" fill="#50ff50"/>
<rect x="363" y="163" width="3" height="4" fill="#50ff50"/>
<rect x="366" y="154" width="3" height="2" fill="#50ff50"/>
<rect x="369" y="158" width="3" height="8" fill="#50ff50"/>
<rect x="372" y="166" width="3" height="7" fill="#50ff50"/>
<rect x="375" y="167" width="3" height="5" fill="#50ff50"/>
<rect x="378" y="155" width="3" height="8" fill="#50ff50"/>
<rect x="381" y="153" width="3" height="7" fill="#50ff50"/>
<rect x="384" y="154" width="3" height="6" fill="#50ff50"/>
<rect x="387" y="143" width="3" height="7" fill="#50ff50"/>
<rect x="390" y="171" width="4" height="5" fill="#50ff50"/>
<rect x="393" y="192" width="4" height="5" fill="#50ff50"/>
<rect x="396" y="153" width="4" height="5" fill="#50ff50"/>
<rect x="400" y="173" width="3" height="5" fill="#50ff50"/>
<rect x="403" y="138" width="3" height="7" fill="#50ff50"/>
<rect x="406" y="174" width="3" height="5" fill="#50ff50"/>
<rect x="409" y="173" width="3" height="8" fill="#50ff50"/>
<rect x="412" y="132" width="3" height="8" fill="#50ff50"/>
<rect x="415" y="211" width="3" height="2" fill="#50ff50"/>
<rect x="418" y="158" width="3" height="6" fill="#50ff50"/>
<rect x="421" y="165" width="3" height="3" fill="#50ff50"/>
<rect x="424" y="166" width="3" height="3" fill="#50ff50"/>
<rect x="427" y="171" width="3" height="4" fill="#50ff50"/>
<rect x="430" y="180" width="3" height="3" fill="#50ff50"/>
<rect x="433" y="143" width="4" height="6" fill="#50ff50"/>
<rect x="436" y="163" width="4" height="5" fill="#50ff50"/>
<rect x="439" y="146" width="4" height="5" fill="#50ff50"/>
<rect x="443" y="177" width="3" height="5" fill="#50ff50"/>
<rect x="446" y="204" width="3" height="1" fill="#50ff50"/>
<rect x="449" y="127" width="3" height="6" fill="#50ff50"/>
<rect x="452" y="147" width="3" height="5" fill="#50ff50"/>
<rect x="455" y="175" width="3" height="4" fill="#50ff50"/>
<rect x="458" y="165" width="3" height="5" fill="#50ff50"/>
<rect x="461" y="169" width="3" height="4" fill="#50ff50"/>
<rect x="464" y="166" width="3" height="7" fill="#50ff50"/>
<rect x="467" y="158" width="3" height="4" fill="#50ff50"/>
<rect x="470" y="169" width="3" height="7" fill="#50ff50"/>
<rect x="473" y="165" width="3" height="3" fill="#50ff50"/>
<rect x="476" y="176" width="3" height="6" fill="#50ff50"/>
<rect x="479" y="167" width="4" height="8" fill="#50ff50"/>
<rect x="482" y="166" width="4" height="4" fill="#50ff50"/>
<rect x="486" y="129" width="3" height="7" fill="#50ff50"/>
<rect x="489" y="176" width="3" height="2" fill="#50ff50"/>
<rect x="492" y="172" width="3" height="4" fill="#50ff50"/>
<rect x="495" y="150" width="3" height="5" fill="#50ff50"/>
<rect x="498" y="144" width="3" height="6" fill="#50ff50"/>
<rect x="501" y="158" width="3" height="6" fill="#50ff50"/>
<rect x="504" y="177" width="3" height="5" fill="#50ff50"/>
<rect x="507" y="126" width="3" height="7" fill="#50ff50"/>
<rect x="510" y="160" width="3" height="5" fill="#50ff50"/>
<rect x="513" y="167" width="3" height="7" fill="#50ff50"/>
<rect x="516" y="169" width="3" height="4" fill="#50ff50"/>
<rect x="519" y="157" width="3" height="3" fill="#50ff50"/>
<rect x="522" y="163" width="4" height="7" fill="#50ff50"/>
<rect x="525" y="32" width="4" height="25" fill="#50ff50"/>
<rect x="529" y="176" width="3" height="2" fill="#50ff50"/>
<rect x="532" y="143" width="3" height="5" fill="#50ff50"/>
<rect x="535" y="187" width="3" height="5" fill="#50ff50"/>
<rect x="538" y="167" width="3" height="3" fill="#50ff50"/>
<rect x="541" y="162" width="3" height="4" fill="#50ff50"/>
<rect x="544" y="143" width="3" height="4" fill="#50ff50"/>
<rect x="547" y="183" width="3" height="5" fill="#50ff50"/>
<rect x="550" y="160" width="3" height="8" fill="#50ff50"/>
<rect x="553" y="165" width="3" height="5" fill="#50ff50"/>
<rect x="556" y="131" width="3" height="9" fill="#50ff50"/>
<rect x="559" y="178" width="3" height="4" fill="#50ff50"/>
<rect x="562" y="152" width="3" height="4" fill="#50ff50"/>
<rect x="565" y="148" width="4" height="6" fill="#50ff50"/>
<rect x="568" y="190" width="4" height="3" fill="#50ff50"/>
<rect x="572" y="136" width="3" height="8" fill="#50ff50"/>
<rect x="575" y="176" width="3" height="5" fill="#50ff50"/>
<rect x="578" y="183" width="3" height="7" fill="#50ff50"/>
<rect x="581" y="147" width="3" height="3" fill="#50ff50"/>
<rect x="584" y="171" width="3" height="4" fill="#50ff50"/>
<rect x="587" y="179" width="3" height="3" fill="#50ff50"/>
<rect x="590" y="155" width="3" height="7" fill="#50ff50"/>
<rect x="593" y="172" width="3" height="6" fill="#50ff50"/>
<rect x="596" y="162" width="3" height="4" fill="#50ff50"/>
<rect x="599" y="147" width="3" height="6" fill="#50ff50"/>
<rect x="602" y="153" width="3" height="8" fill="#50ff50"/>
<rect x="605" y="161" width="3" height="8" fill="#50ff50"/>
<rect x="608" y="162" width="4" height="6" fill="#50ff50"/>
<rect x="611" y="169" width="4" height="4" fill="#50ff50"/>
<rect x="615" y="179" width="3" height="5" fill="#50ff50"/>
<rect x="618" y="151" width="3" height="10" fill="#50ff50"/>
<rect x="621" y="179" width="3" height="5" fill="#50ff50"/>
<rect x="624" y="162" width="3" height="8" fill="#50ff50"/>
<rect x="627" y="178" width="3" height="5" fill="#50ff50"/>
<rect x="630" y="153" width="3" height="7" fill="#50ff50"/>
<rect x="633" y="175" width="3" height="4" fill="#50ff50"/>
<rect x="636" y="160" width="3" height="7" fill="#50ff50"/>
<rect x="639" y="160" width="3" height="3" fill="#50ff50"/>
<rect x="642" y="164" width="3" height="7" fill="#50ff50"/>
<rect x="645" y="158" width="3" height="3" fill="#50ff50"/>
<rect x="648" y="159" width="3" height="4" fill="#50ff50"/>
<rect x="651" y="165" width="4" height="5" fill="#50ff50"/>
<rect x="654" y="160" width="4" height="6" fill="#50ff50"/>
<rect x="658" y="162" width="3" height="4" fill="#50ff50"/>
<rect x="661" y="182" width="3" height="4" fill="#50ff50"/>
<rect x="664" y="169" width="3" height="2" fill="#50ff50"/>
<rect x="667" y="178" width="3" height="5" fill="#50ff50"/>
<rect x="670" y="141" width="3" height="7" fill="#50ff50"/>
<rect x="673" y="146" width="3" height="7" fill="#50ff50"/>
<rect x="676" y="193" width="3" height="3" fill="#50ff50"/>
<rect x="679" y="177" width="3" height="2" fill="#50ff50"/>
<rect x="682" y="165" width="3" height="4" fill="#50ff50"/>
<rect x="685" y="139" width="3" height="6" fill="#50ff50"/>
<rect x="688" y="154" width="3" height="3" fill="#50ff50"/>
<rect x="691" y="175" width="3" height="4" fill="#50ff50"/>
<rect x="694" y="160" width="4" height="5" fill="#50ff50"/>
<rect x="697" y="176" width="4" height="6" fill="#50ff50"/>
<rect x="701" y="159" width="3" height="5" fill="#50ff50"/>
<rect x="704" y="174" width="3" height="3" fill="#50ff50"/>
<rect x="707" y="128" width="3" height="6" fill="#50ff50"/>
<rect x="710" y="144" width="3" height="7" fill="#50ff50"/>
<rect x="713" y="195" width="3" height="1" fill="#50ff50"/>
<rect x="716" y="164" width="3" height="2" fill="#50ff50"/>
<rect x="719" y="151" width="3" height="5" fill="#50ff50"/>
<rect x="722" y="178" width="3" height="4" fill="#50ff50"/>
<rect x="725" y="148" width="3" height="8" fill="#50ff50"/>
<rect x="728" y="130" width="3" height="6" fill="#50ff50"/>
<rect x="731" y="191" width="3" height="5" fill="#50ff50"/>
<rect x="734" y="177" width="3" height="7" fill="#50ff50"/>
<rect x="737" y="117" width="4" height="7" fill="#50ff50"/>
<rect x="740" y="181" width="4" height="3" fill="#50ff50"/>
<rect x="743" y="169" width="4" height="6" fill="#50ff50"/>
<rect x="747" y="166" width="3" height="7" fill="#50ff50"/>
<rect x="750" y="144" width="3" height="7" fill="#50ff50"/>
<rect x="753" y="177" width="3" height="7" fill="#50ff50"/>
<rect x="756" y="188" width="3" height="3" fill="#50ff50"/>
<rect x="759" y="160" width="3" height="6" fill="#50ff50"/>
<rect x="762" y="170" width="3" height="6" fill="#50ff50"/>
<rect x="765" y="150" width="3" height="2" fill="#50ff50"/>
<rect x="768" y="205" width="3" height="2" fill="#50ff50"/>
<rect x="771" y="172" width="3" height="2" fill="#50ff50"/>
<rect x="774" y="135" width="3" height="5" fill="#50ff50"/>
<rect x="777" y="132" width="3" height="8" fill="#50ff50"/>
<rect x="780" y="192" width="4" height="4" fill="#50ff50"/>
<rect x="783" y="179" width="4" height="2" fill="#50ff50"/>
<rect x="786" y="180" width="4" height="5" fill="#50ff50"/>
<rect x="790" y="169" width="3" height="6" fill="#50ff50"/>
<rect x="793" y="183" width="3" height="4" fill="#50ff50"/>
<rect x="796" y="174" width="3" height="6" fill="#50ff50"/>
<rect x="799" y="187" width="3" height="4" fill="#50ff50"/>
<rect x="802" y="181" width="3" height="5" fill="#50ff50"/>
<rect x="805" y="157" width="3" height="8" fill="#50ff50"/>
<rect x="808" y="181" width="3" height="5" fill="#50ff50"/>
<rect x="811" y="179" width="3" height="5" fill="#50ff50"/>
<rect x="814" y="82" width="3" height="8" fill="#50ff50"/>
<rect x="817" y="165" width="3" height="3" fill="#50ff50"/>
<rect x="820" y="147" width="3" height="6" fill="#50ff50"/>
<rect x="823" y="132" width="4" height="12" fill="#50ff50"/>
<rect x="826" y="167" width="4" height="5" fill="#50ff50"/>
<rect x="829" y="156" width="4" height="6" fill="#50ff50"/>
<rect x="833" y="183" width="3" height="6" fill="#50ff50"/>
<rect x="836" y="169" width="3" height="5" fill="#50ff50"/>
<rect x="839" y="170" width="3" height="4" fill="#50ff50"/>
<rect x="842" y="165" width="3" height="4" fill="#50ff50"/>
<rect x="845" y="135" width="3" height="6" fill="#50ff50"/>
<rect x="848" y="153" width="3" height="4" fill="#50ff50"/>
<rect x="851" y="199" width="3" height="5" fill="#50ff50"/>
<rect x="854" y="179" width="3" height="3" fill="#50ff50"/>
<rect x="857" y="189" width="3" height="2" fill="#50ff50"/>
<rect x="860" y="167" width="3" height="3" fill="#50ff50"/>
<rect x="863" y="183" width="3" height="2" fill="#50ff50"/>
<rect x="866" y="175" width="4" height="4" fill="#50ff50"/>
<rect x="869" y="164" width="4" height="4" fill="#50ff50"/>
<rect x="872" y="124" width="4" height="8" fill="#50ff50"/>
<rect x="876" y="184" width="3" height="6" fill="#50ff50"/>
<rect x="879" y="187" width="3" height="5" fill="#50ff50"/>
<rect x="882" y="146" width="3" height="8" fill="#50ff50"/>
<rect x="885" y="167" width="3" height="6" fill="#50ff50"/>
<rect x="888" y="174" width="3" height="3" fill="#50ff50"/>
<rect x="891" y="176" width="3" height="4" fill="#50ff50"/>
<rect x="894" y="168" width="3" height="7" fill="#50ff50"/>
<rect x="897" y="167" width="3" height="6" fill="#50ff50"/>
<rect x="900" y="148" width="3" height="8" fill="#50ff50"/>
<rect x="903" y="209" width="3" height="1" fill="#50ff50"/>
<rect x="906" y="141" width="3" height="8" fill="#50ff50"/>
<rect x="909" y="192" width="4" height="4" fill="#50ff50"/>
<rect x="912" y="167" width="4" height="7" fill="#50ff50"/>
<rect x="915" y="149" width="4" height="6" fill="#50ff50"/>
<rect x="919" y="178" width="3" height="4" fill="#50ff50"/>
<rect x="922" y="138" width="3" height="6" fill="#50ff50"/>
<rect x="925" y="168" width="3" height="6" fill="#50ff50"/>
<rect x="928" y="172" width="3" height="4" fill="#50ff50"/>
<rect x="931" y="173" width="3" height="3" fill="#50ff50"/>
<rect x="934" y="200" width="3" height="2" fill="#50ff50"/>
<rect x="937" y="174" width="3" height="5" fill="#50ff50"/>
<rect x="67" y="14" width="875" height="1" fill="#000"/>
<rect x="67" y="216" width="875" height="1" fill="#000"/>
<rect x="67" y="14" width="1" height="203" fill="#000"/>
<rect x="941" y="14" width="1" height="203" fill="#000"/>
<rect x="67" y="230" width="875" height="203" fill="#fff"/>
<rect x="67" y="402" width="9" height="1" fill="#000"/>
<rect x="932" y="402" width="10" height="1" fill="#000"/>
<rect x="67" y="372" width="9" height="1" fill="#000"/>
<rect x="932" y="372" width="10" height="1" fill="#000"/>
<rect x="67" y="342" width="9" height="1" fill="#000"/>
<rect x="932" y="342" width="10" height="1" fill="#000"/>
<rect x="67" y="313" width="9" height="1" fill="#000"/>
<rect x="932" y="313" width="10" height="1" fill="#000"/>
<rect x="67" y="283" width="9" height="1" fill="#000"/>
<rect x="932" y="283" width="10" height="1" fill="#000"/>
<rect x="67" y="253" width="9" height="1" fill="#000"/>
<rect x="932" y="253" width="10" height="1" fill="#000"/>
<rect x="68" y="248" width="3" height="184" fill="#00008f"/>
<rect x="71" y="250" width="18" height="182" fill="#00008f"/>
<rect x="89" y="251" width="46" height="181" fill="#00008f"/>
<rect x="135" y="252" width="145" height="180" fill="#00008f"/>
<rect x="280" y="253" width="220" height="179" fill="#00008f"/>
<rect x="500" y="254" width="200" height="178" fill="#00008f"/>
<rect x="700" y="255" width="100" height="177" fill="#00008f"/>
<rect x="800" y="256" width="60" height="176" fill="#00008f"/>
<rect x="860" y="257" width="25" height="175" fill="#00008f"/>
<rect x="885" y="259" width="6" height="173" fill="#00008f"/>
<rect x="891" y="260" width="9" height="172" fill="#00008f"/>
<rect x="900" y="259" width="6" height="173" fill="#00008f"/>
<rect x="906" y="260" width="13" height="172" fill="#00008f"/>
<rect x="919" y="261" width="3" height="171" fill="#00008f"/>
<rect x="922" y="260" width="3" height="172" fill="#00008f"/>
<rect x="925" y="261" width="6" height="171" fill="#00008f"/>
<rect x="931" y="262" width="6" height="170" fill="#00008f"/>
<rect x="937" y="268" width="3" height="164" fill="#00008f"/>
<rect x="67" y="230" width="875" height="1" fill="#000"/>
<rect x="67" y="432" width="875" height="1" fill="#000"/>
<rect x="67" y="230" width="1" height="203" fill="#000"/>
<rect x="941" y="230" width="1" height="203" fill="#000"/>
<rect x="67" y="446" width="875" height="203" fill="#fff"/>
<rect x="68" y="600" width="3" height="48" fill="#00008f"/>
<rect x="71" y="603" width="3" height="45" fill="#00008f"/>
<rect x="74" y="620" width="3" height="28" fill="#00008f"/>
<rect x="77" y="625" width="3" height="23" fill="#00008f"/>
<rect x="80" y="626" width="3" height="22" fill="#00008f"/>
<rect x="83" y="592" width="3" height="56" fill="#00008f"/>
<rect x="86" y="618" width="3" height="30" fill="#00008f"/>
<rect x="89" y="612" width="4" height="36" fill="#00008f"/>
<rect x="92" y="629" width="4" height="19" fill="#00008f"/>
<rect x="96" y="627" width="3" height="21" fill="#00008f"/>
<rect x="99" y="609" width="3" height="39" fill="#00008f"/>
<rect x="102" y="612" width="3" height="36" fill="#00008f"/>
<rect x="105" y="610" width="3" height="38" fill="#00008f"/>
<rect x="108" y="622" width="3" height="26" fill="#00008f"/>
<rect x="111" y="608" width="3" height="40" fill="#00008f"/>
<rect x="114" y="621" width="3" height="27" fill="#00008f"/>
<rect x="117" y="615" width="3" height="33" fill="#00008f"/>
<rect x="120" y="618" width="3" height="30" fill="#00008f"/>
<rect x="123" y="610" width="3" height="38" fill="#00008f"/>
<rect x="126" y="633" width="3" height="15" fill="#00008f"/>
<rect x="129" y="617" width="3" height="31" fill="#00008f"/>
<rect x="132" y="610" width="4" height="38" fill="#00008f"/>
<rect x="135" y="602" width="4" height="46" fill="#00008f"/>
<rect x="139" y="621" width="3" height="27" fill="#00008f"/>
<rect x="142" y="643" width="3" height="5" fill="#00008f"/>
<rect x="145" y="619" width="3" height="29" fill="#00008f"/>
<rect x="148" y="625" width="3" height="23" fill="#00008f"/>
<rect x="151" y="613" width="3" height="35" fill="#00008f"/>
<rect x="154" y="605" width="3" height="43" fill="#00008f"/>
<rect x="157" y="623" width="3" height="25" fill="#00008f"/>
<rect x="160" y="614" width="3" height="34" fill="#00008f"/>
<rect x="163" y="614" width="3" height="34" fill="#00008f"/>
<rect x="166" y="620" width="3" height="28" fill="#00008f"/>
<rect x="169" y="612" width="3" height="36" fill="#00008f"/>
<rect x="172" y="609" width="3" height="39" fill="#00008f"/>
<rect x="175" y="617" width="4" height="31" fill="#00008f"/>
<rect x="178" y="616" width="4" height="32" fill="#00008f"/>
<rect x="182" y="608" width="3" height="40" fill="#00008f"/>
<rect x="185" y="594" width="3" height="54" fill="#00008f"/>
<rect x="188" y="606" width="3" height="42" fill="#00008f"/>
<rect x="191" y="614" width="3" height="34" fill="#00008f"/>
<rect x="194" y="616" width="3" height="32" fill="#00008f"/>
<rect x="197" y="621" width="3" height="27" fill="#00008f"/>
<rect x="200" y="618" width="3" height="30" fill="#00008f"/>
<rect x="203" y="628" width="3" height="20" fill="#00008f"/>
<rect x="206" y="630" width="3" height="18" fill="#00008f"/>
<rect x="209" y="622" width="3" height="26" fill="#00008f"/>
<rect x="212" y="602" width="3" height="46" fill="#00008f"/>
<rect x="215" y="626" width="3" height="22" fill="#00008f"/>
<rect x="218" y="594" width="4" height="54" fill="#00008f"/>
<rect x="221" y="614" width="4" height="34" fill="#00008f"/>
<rect x="225" y="608" width="3" height="40" fill="#00008f"/>
<rect x="228" y="604" width="3" height="44" fill="#00008f"/>
<rect x="231" y="598" width="3" height="50" fill="#00008f"/>
<rect x="234" y="618" width="3" height="30" fill="#00008f"/>
<rect x="237" y="617" width="3" height="31" fill="#00008f"/>
<rect x="240" y="616" width="3" height="32" fill="#00008f"/>
<rect x="243" y="607" width="3" height="41" fill="#00008f"/>
<rect x="246" y="609" width="3" height="39" fill="#00008f"/>
<rect x="249" y="623" width="3" height="25" fill="#00008f"/>
<rect x="252" y="615" width="3" height="33" fill="#00008f"/>
<rect x="255" y="603" width="3" height="45" fill="#00008f"/>
<rect x="258" y="592" width="3" height="56" fill="#00008f"/>
<rect x="261" y="615" width="4" height="33" fill="#00008f"/>
<rect x="264" y="612" width="4" height="36" fill="#00008f"/>
<rect x="267" y="606" width="4" height="42" fill="#00008f"/>
<rect x="271" y="622" width="3" height="26" fill="#00008f"/>
<rect x="274" y="611" width="3" height="37" fill="#00008f"/>
<rect x="277" y="614" width="3" height="34" fill="#00008f"/>
<rect x="280" y="625" width="3" height="23" fill="#00008f"/>
<rect x="283" y="615" width="3" height="33" fill="#00008f"/>
<rect x="286" y="609" width="3" height="39" fill="#00008f"/>
<rect x="289" y="621" width="3" height="27" fill="#00008f"/>
<rect x="292" y="632" width="3" height="16" fill="#00008f"/>
<rect x="295" y="595" width="3" height="53" fill="#00008f"/>
<rect x="298" y="605" width="3" height="43" fill="#00008f"/>
<rect x="301" y="628" width="3" height="20" fill="#00008f"/>
<rect x="304" y="633" width="4" height="15" fill="#00008f"/>
<rect x="307" y="628" width="4" height="20" fill="#00008f"/>
<rect x="310" y="612" width="4" height="36" fill="#00008f"/>
<rect x="314" y="632" width="3" height="16" fill="#00008f"/>
<rect x="317" y="588" width="3" height="60" fill="#00008f"/>
<rect x="320" y="589" width="3" height="59" fill="#00008f"/>
<rect x="323" y="610" width="3" height="38" fill="#00008f"/>
<rect x="326" y="614" width="3" height="34" fill="#00008f"/>
<rect x="329" y="621" width="3" height="27" fill="#00008f"/>
<rect x="335" y="609" width="3" height="39" fill="#00008f"/>
<rect x="338" y="611" width="3" height="37" fill="#00008f"/>
<rect x="341" y="607" width="3" height="41" fill="#00008f"/>
<rect x="344" y="614" width="3" height="34" fill="#00008f"/>
<rect x="347" y="621" width="4" height="27" fill="#00008f"/>
<rect x="350" y="616" width="4" height="32" fill="#00008f"/>
<rect x="353" y="599" width="4" height="49" fill="#00008f"/>
<rect x="357" y="621" width="3" height="27" fill="#00008f"/>
<rect x="360" y="615" width="3" height="33" fill="#00008f"/>
<rect x="363" y="613" width="3" height="35" fill="#00008f"/>
<rect x="366" y="605" width="3" height="43" fill="#00008f"/>
<rect x="369" y="611" width="3" height="37" fill="#00008f"/>
<rect x="372" y="616" width="3" height="32" fill="#00008f"/>
<rect x="375" y="612" width="3" height="36" fill="#00008f"/>
<rect x="378" y="609" width="3" height="39" fill="#00008f"/>
<rect x="381" y="604" width="3" height="44" fill="#00008f"/>
<rect x="384" y="609" width="3" height="39" fill="#00008f"/>
<rect x="387" y="598" width="3" height="50" fill="#00008f"/>
<rect x="390" y="617" width="4" height="31" fill="#00008f"/>
<rect x="393" y="632" width="4" height="16" fill="#00008f"/>
<rect x="396" y="605" width="4" height="43" fill="#00008f"/>
<rect x="400" y="619" width="3" height="29" fill="#00008f"/>
<rect x="403" y="599" width="3" height="49" fill="#00008f"/>
<rect x="406" y="623" width="3" height="25" fill="#00008f"/>
<rect x="409" y="624" width="3" height="24" fill="#00008f"/>
<rect x="412" y="590" width="3" height="58" fill="#00008f"/>
<rect x="415" y="647" width="3" height="1" fill="#00008f"/>
<rect x="418" y="609" width="3" height="39" fill="#00008f"/>
<rect x="421" y="611" width="3" height="37" fill="#00008f"/>
<rect x="424" y="614" width="3" height="34" fill="#00008f"/>
<rect x="427" y="617" width="3" height="31" fill="#00008f"/>
<rect x="430" y="622" width="3" height="26" fill="#00008f"/>
<rect x="433" y="596" width="4" height="52" fill="#00008f"/>
<rect x="436" y="609" width="4" height="39" fill="#00008f"/>
<rect x="439" y="601" width="4" height="47" fill="#00008f"/>
<rect x="443" y="620" width="3" height="28" fill="#00008f"/>
<rect x="446" y="641" width="3" height="7" fill="#00008f"/>
<rect x="449" y="577" width="3" height="71" fill="#00008f"/>
<rect x="452" y="595" width="3" height="53" fill="#00008f"/>
<rect x="455" y="618" width="3" height="30" fill="#00008f"/>
<rect x="458" y="612" width="3" height="36" fill="#00008f"/>
<rect x="461" y="615" width="3" height="33" fill="#00008f"/>
<rect x="464" y="615" width="3" height="33" fill="#00008f"/>
<rect x="467" y="609" width="3" height="39" fill="#00008f"/>
<rect x="470" y="622" width="3" height="26" fill="#00008f"/>
<rect x="473" y="609" width="3" height="39" fill="#00008f"/>
<rect x="476" y="621" width="3" height="27" fill="#00008f"/>
<rect x="479" y="611" width="4" height="37" fill="#00008f"/>
<rect x="482" y="614" width="4" height="34" fill="#00008f"/>
<rect x="486" y="590" width="3" height="58" fill="#00008f"/>
<rect x="489" y="618" width="3" height="30" fill="#00008f"/>
<rect x="492" y="618" width="3" height="30" fill="#00008f"/>
<rect x="495" y="602" width="3" height="46" fill="#00008f"/>
<rect x="498" y="600" width="3" height="48" fill="#00008f"/>
<rect x="501" y="607" width="3" height="41" fill="#00008f"/>
<rect x="504" y="618" width="3" height="30" fill="#00008f"/>
<rect x="507" y="589" width="3" height="59" fill="#00008f"/>
<rect x="510" y="611" width="3" height="37" fill="#00008f"/>
<rect x="513" y="615" width="3" height="33" fill="#00008f"/>
<rect x="516" y="617" width="3" height="31" fill="#00008f"/>
<rect x="519" y="600" width="3" height="48" fill="#00008f"/>
<rect x="522" y="613" width="4" height="35" fill="#00008f"/>
<rect x="525" y="540" width="4" height="108" fill="#00008f"/>
<rect x="529" y="619" width="3" height="29" fill="#00008f"/>
<rect x="532" y="598" width="3" height="50" fill="#00008f"/>
<rect x="535" y="633" width="3" height="15" fill="#00008f"/>
<rect x="538" y="614" width="3" height="34" fill="#00008f"/>
<rect x="541" y="609" width="3" height="39" fill="#00008f"/>
<rect x="544" y="595" width="3" height="53" fill="#00008f"/>
<rect x="547" y="625" width="3" height="23" fill="#00008f"/>
<rect x="550" y="612" width="3" height="36" fill="#00008f"/>
<rect x="553" y="618" width="3" height="30" fill="#00008f"/>
<rect x="556" y="589" width="3" height="59" fill="#00008f"/>
<rect x="559" y="621" width="3" height="27" fill="#00008f"/>
<rect x="562" y="602" width="3" height="46" fill="#00008f"/>
<rect x="565" y="600" width="4" height="48" fill="#00008f"/>
<rect x="568" y="628" width="4" height="20" fill="#00008f"/>
<rect x="572" y="595" width="3" height="53" fill="#00008f"/>
<rect x="575" y="621" width="3" height="27" fill="#00008f"/>
<rect x="578" y="629" width="3" height="19" fill="#00008f"/>
<rect x="581" y="599" width="3" height="49" fill="#00008f"/>
<rect x="584" y="621" width="3" height="27" fill="#00008f"/>
<rect x="587" y="621" width="3" height="27" fill="#00008f"/>
<rect x="590" y="609" width="3" height="39" fill="#00008f"/>
<rect x="593" y="621" width="3" height="27" fill="#00008f"/>
<rect x="596" y="611" width="3" height="37" fill="#00008f"/>
<rect x="599" y="604" width="3" height="44" fill="#00008f"/>
<rect x="602" y="607" width="3" height="41" fill="#00008f"/>
<rect x="605" y="610" width="3" height="38" fill="#00008f"/>
<rect x="608" y="617" width="4" height="31" fill="#00008f"/>
<rect x="611" y="612" width="4" height="36" fill="#00008f"/>
<rect x="615" y="625" width="3" height="23" fill="#00008f"/>
<rect x="618" y="606" width="3" height="42" fill="#00008f"/>
<rect x="621" y="624" width="3" height="24" fill="#00008f"/>
<rect x="624" y="619" width="3" height="29" fill="#00008f"/>
<rect x="627" y="623" width="3" height="25" fill="#00008f"/>
<rect x="630" y="609" width="3" height="39" fill="#00008f"/>
<rect x="633" y="619" width="3" height="29" fill="#00008f"/>
<rect x="636" y="605" width="3" height="43" fill="#00008f"/>
<rect x="639" y="605" width="3" height="43" fill="#00008f"/>
<rect x="642" y="611" width="3" height="37" fill="#00008f"/>
<rect x="645" y="606" width="3" height="42" fill="#00008f"/>
<rect x="648" y="609" width="3" height="39" fill="#00008f"/>
<rect x="651" y="616" width="4" height="32" fill="#00008f"/>
<rect x="654" y="609" width="4" height="39" fill="#00008f"/>
<rect x="658" y="616" width="3" height="32" fill="#00008f"/>
<rect x="661" y="621" width="3" height="27" fill="#00008f"/>
<rect x="664" y="614" width="3" height="34" fill="#00008f"/>
<rect x="667" y="623" width="3" height="25" fill="#00008f"/>
<rect x="670" y="605" width="3" height="43" fill="#00008f"/>
<rect x="673" y="609" width="3" height="39" fill="#00008f"/>
<rect x="676" y="632" width="3" height="16" fill="#00008f"/>
<rect x="679" y="623" width="3" height="25" fill="#00008f"/>
<rect x="682" y="614" width="3" height="34" fill="#00008f"/>
<rect x="685" y="591" width="3" height="57" fill="#00008f"/>
<rect x="688" y="602" width="3" height="46" fill="#00008f"/>
<rect x="691" y="621" width="3" height="27" fill="#00008f"/>
<rect x="694" y="607" width="4" height="41" fill="#00008f"/>
<rect x="697" y="623" width="4" height="25" fill="#00008f"/>
<rect x="701" y="609" width="3" height="39" fill="#00008f"/>
<rect x="704" y="618" width="3" height="30" fill="#00008f"/>
<rect x="707" y="591" width="3" height="57" fill="#00008f"/>
<rect x="710" y="594" width="3" height="54" fill="#00008f"/>
<rect x="713" y="635" width="3" height="13" fill="#00008f"/>
<rect x="716" y="609" width="3" height="39" fill="#00008f"/>
<rect x="719" y="602" width="3" height="46" fill="#00008f"/>
<rect x="722" y="626" width="3" height="22" fill="#00008f"/>
<rect x="725" y="602" width="3" height="46" fill="#00008f"/>
<rect x="728" y="582" width="3" height="66" fill="#00008f"/>
<rect x="731" y="634" width="3" height="14" fill="#00008f"/>
<rect x="734" y="622" width="3" height="26" fill="#00008f"/>
<rect x="737" y="581" width="4" height="67" fill="#00008f"/>
<rect x="740" y="625" width="4" height="23" fill="#00008f"/>
<rect x="743" y="616" width="4" height="32" fill="#00008f"/>
<rect x="747" y="618" width="3" height="30" fill="#00008f"/>
<rect x="750" y="595" width="3" height="53" fill="#00008f"/>
<rect x="753" y="623" width="3" height="25" fill="#00008f"/>
<rect x="756" y="629" width="3" height="19" fill="#00008f"/>
<rect x="759" y="607" width="3" height="41" fill="#00008f"/>
<rect x="762" y="619" width="3" height="29" fill="#00008f"/>
<rect x="765" y="601" width="3" height="47" fill="#00008f"/>
<rect x="768" y="640" width="3" height="8" fill="#00008f"/>
<rect x="771" y="616" width="3" height="32" fill="#00008f"/>
<rect x="774" y="599" width="3" height="49" fill="#00008f"/>
<rect x="777" y="592" width="3" height="56" fill="#00008f"/>
<rect x="780" y="632" width="4" height="16" fill="#00008f"/>
<rect x="783" y="623" width="4" height="25" fill="#00008f"/>
<rect x="786" y="623" width="4" height="25" fill="#00008f"/>
<rect x="790" y="615" width="3" height="33" fill="#00008f"/>
<rect x="793" y="628" width="3" height="20" fill="#00008f"/>
<rect x="796" y="618" width="3" height="30" fill="#00008f"/>
<rect x="799" y="627" width="3" height="21" fill="#00008f"/>
<rect x="802" y="623" width="3" height="25" fill="#00008f"/>
<rect x="805" y="611" width="3" height="37" fill="#00008f"/>
<rect x="808" y="628" width="3" height="20" fill="#00008f"/>
<rect x="811" y="621" width="3" height="27" fill="#00008f"/>
<rect x="814" y="549" width="3" height="99" fill="#00008f"/>
<rect x="817" y="609" width="3" height="39" fill="#00008f"/>
<rect x="820" y="601" width="3" height="47" fill="#00008f"/>
<rect x="823" y="593" width="4" height="55" fill="#00008f"/>
<rect x="826" y="614" width="4" height="34" fill="#00008f"/>
<rect x="829" y="607" width="4" height="41" fill="#00008f"/>
<rect x="833" y="626" width="3" height="22" fill="#00008f"/>
<rect x="836" y="616" width="3" height="32" fill="#00008f"/>
<rect x="839" y="616" width="3" height="32" fill="#00008f"/>
<rect x="842" y="613" width="3" height="35" fill="#00008f"/>
<rect x="845" y="590" width="3" height="58" fill="#00008f"/>
<rect x="848" y="600" width="3" height="48" fill="#00008f"/>
<rect x="851" y="639" width="3" height="9" fill="#00008f"/>
<rect x="854" y="623" width="3" height="25" fill="#00008f"/>
<rect x="857" y="630" width="3" height="18" fill="#00008f"/>
<rect x="860" y="610" width="3" height="38" fill="#00008f"/>
<rect x="863" y="625" width="3" height="23" fill="#00008f"/>
<rect x="866" y="623" width="4" height="25" fill="#00008f"/>
<rect x="869" y="608" width="4" height="40" fill="#00008f"/>
<rect x="872" y="580" width="4" height="68" fill="#00008f"/>
<rect x="876" y="628" width="3" height="20" fill="#00008f"/>
<rect x="879" y="628" width="3" height="20" fill="#00008f"/>
<rect x="882" y="604" width="3" height="44" fill="#00008f"/>
<rect x="885" y="617" width="3" height="31" fill="#00008f"/>
<rect x="888" y="616" width="3" height="32" fill="#00008f"/>
<rect x="891" y="621" width="3" height="27" fill="#00008f"/>
<rect x="894" y="617" width="3" height="31" fill="#00008f"/>
<rect x="897" y="616" width="3" height="32" fill="#00008f"/>
<rect x="900" y="602" width="3" height="46" fill="#00008f"/>
<rect x="903" y="644" width="3" height="4" fill="#00008f"/>
<rect x="906" y="598" width="3" height="50" fill="#00008f"/>
<rect x="909" y="632" width="4" height="16" fill="#00008f"/>
<rect x="912" y="613" width="4" height="35" fill="#00008f"/>
<rect x="915" y="599" width="4" height="49" fill="#00008f"/>
<rect x="919" y="617" width="3" height="31" fill="#00008f"/>
<rect x="922" y="595" width="3" height="53" fill="#00008f"/>
<rect x="925" y="620" width="3" height="28" fill="#00008f"/>
<rect x="928" y="619" width="3" height="29" fill="#00008f"/>
<rect x="931" y="620" width="3" height="28" fill="#00008f"/>
<rect x="934" y="636" width="3" height="12" fill="#00008f"/>
<rect x="937" y="619" width="3" height="29" fill="#00008f"/>
<rect x="68" y="581" width="3" height="19" fill="#800000"/>
<rect x="71" y="586" width="3" height="17" fill="#800000"/>
<rect x="74" y="607" width="3" height="13" fill="#800000"/>
<rect x="77" y="612" width="3" height="13" fill="#800000"/>
<rect x="80" y="620" width="3" height="6" fill="#800000"/>
<rect x="83" y="578" width="3" height="14" fill="#800000"/>
<rect x="86" y="607" width="3" height="11" fill="#800000"/>
<rect x="89" y="603" width="4" height="9" fill="#800000"/>
<rect x="92" y="619" width="4" height="10" fill="#800000"/>
<rect x="96" y="618" width="3" height="9" fill="#800000"/>
<rect x="99" y="596" width="3" height="13" fill="#800000"/>
<rect x="102" y="604" width="3" height="8" fill="#800000"/>
<rect x="105" y="601" width="3" height="9" fill="#800000"/>
<rect x="108" y="616" width="3" height="6" fill="#800000"/>
<rect x="111" y="594" width="3" height="14" fill="#800000"/>
<rect x="114" y="609" width="3" height="12" fill="#800000"/>
<rect x="117" y="603" width="3" height="12" fill="#800000"/>
<rect x="120" y="612" width="3" height="6" fill="#800000"/>
<rect x="123" y="592" width="3" height="18" fill="#800000"/>
<rect x="126" y="626" width="3" height="7" fill="#800000"/>
<rect x="129" y="607" width="3" height="10" fill="#800000"/>
<rect x="132" y="596" width="4" height="14" fill="#800000"/>
<rect x="135" y="589" width="4" height="13" fill="#800000"/>
<rect x="139" y="615" width="3" height="6" fill="#800000"/>
<rect x="145" y="607" width="3" height="12" fill="#800000"/>
<rect x="148" y="618" width="3" height="7" fill="#800000"/>
<rect x="151" y="596" width="3" height="17" fill="#800000"/>
<rect x="154" y="594" width="3" height="11" fill="#800000"/>
<rect x="157" y="608" width="3" height="15" fill="#800000"/>
<rect x="160" y="607" width="3" height="7" fill="#800000"/>
<rect x="163" y="607" width="3" height="7" fill="#800000"/>
<rect x="166" y="612" width="3" height="8" fill="#800000"/>
<rect x="169" y="599" width="3" height="13" fill="#800000"/>
<rect x="172" y="594" width="3" height="15" fill="#800000"/>
<rect x="175" y="605" width="4" height="12" fill="#800000"/>
<rect x="178" y="604" width="4" height="12" fill="#800000"/>
<rect x="182" y="595" width="3" height="13" fill="#800000"/>
<rect x="185" y="569" width="3" height="25" fill="#800000"/>
<rect x="188" y="591" width="3" height="15" fill="#800000"/>
<rect x="191" y="607" width="3" height="7" fill="#800000"/>
<rect x="194" y="605" width="3" height="11" fill="#800000"/>
<rect x="197" y="604" width="3" height="17" fill="#800000"/>
<rect x="200" y="606" width="3" height="12" fill="#800000"/>
<rect x="203" y="625" width="3" height="3" fill="#800000"/>
<rect x="206" y="620" width="3" height="10" fill="#800000"/>
<rect x="209" y="610" width="3" height="12" fill="#800000"/>
<rect x="212" y="594" width="3" height="8" fill="#800000"/>
<rect x="215" y="622" width="3" height="4" fill="#800000"/>
<rect x="218" y="582" width="4" height="12" fill="#800000"/>
<rect x="221" y="603" width="4" height="11" fill="#800000"/>
<rect x="225" y="599" width="3" height="9" fill="#800000"/>
<rect x="228" y="594" width="3" height="10" fill="#800000"/>
<rect x="231" y="583" width="3" height="15" fill="#800000"/>
<rect x="234" y="605" width="3" height="13" fill="#800000"/>
<rect x="237" y="604" width="3" height="13" fill="#800000"/>
<rect x="240" y="604" width="3" height="12" fill="#800000"/>
<rect x="243" y="598" width="3" height="9" fill="#800000"/>
<rect x="246" y="597" width="3" height="12" fill="#800000"/>
<rect x="249" y="614" width="3" height="9" fill="#800000"/>
<rect x="252" y="601" width="3" height="14" fill="#800000"/>
<rect x="255" y="589" width="3" height="14" fill="#800000"/>
<rect x="258" y="573" width="3" height="19" fill="#800000"/>
<rect x="261" y="595" width="4" height="20" fill="#800000"/>
<rect x="264" y="605" width="4" height="7" fill="#800000"/>
<rect x="267" y="596" width="4" height="10" fill="#800000"/>
<rect x="271" y="610" width="3" height="12" fill="#800000"/>
<rect x="274" y="599" width="3" height="12" fill="#800000"/>
<rect x="277" y="600" width="3" height="14" fill="#800000"/>
<rect x="280" y="615" width="3" height="10" fill="#800000"/>
<rect x="283" y="605" width="3" height="10" fill="#800000"/>
<rect x="286" y="595" width="3" height="14" fill="#800000"/>
<rect x="289" y="610" width="3" height="11" fill="#800000"/>
<rect x="292" y="630" width="3" height="2" fill="#800000"/>
<rect x="295" y="573" width="3" height="22" fill="#800000"/>
<rect x="298" y="591" width="3" height="14" fill="#800000"/>
<rect x="301" y="619" width="3" height="9" fill="#800000"/>
<rect x="304" y="624" width="4" height="9" fill="#800000"/>
<rect x="307" y="618" width="4" height="10" fill="#800000"/>
<rect x="310" y="600" width="4" height="12" fill="#800000"/>
<rect x="314" y="630" width="3" height="2" fill="#800000"/>
<rect x="317" y="574" width="3" height="14" fill="#800000"/>
<rect x="320" y="573" width="3" height="16" fill="#800000"/>
<rect x="323" y="602" width="3" height="8" fill="#800000"/>
<rect x="326" y="610" width="3" height="4" fill="#800000"/>
<rect x="329" y="615" width="3" height="6" fill="#800000"/>
<rect x="335" y="598" width="3" height="11" fill="#800000"/>
<rect x="338" y="600" width="3" height="11" fill="#800000"/>
<rect x="341" y="594" width="3" height="13" fill="#800000"/>
<rect x="344" y="603" width="3" height="11" fill="#800000"/>
<rect x="347" y="618" width="4" height="3" fill="#800000"/>
<rect x="350" y="601" width="4" height="15" fill="#800000"/>
<rect x="353" y="591" width="4" height="8" fill="#800000"/>
<rect x="357" y="611" width="3" height="10" fill="#800000"/>
<rect x="360" y="602" width="3" height="13" fill="#800000"/>
<rect x="363" y="599" width="3" height="14" fill="#800000"/>
<rect x="366" y="588" width="3" height="17" fill="#800000"/>
<rect x="369" y="598" width="3" height="13" fill="#800000"/>
<rect x="372" y="605" width="3" height="11" fill="#800000"/>
<rect x="375" y="604" width="3" height="8" fill="#800000"/>
<rect x="378" y="595" width="3" height="14" fill="#800000"/>
<rect x="381" y="592" width="3" height="12" fill="#800000"/>
<rect x="384" y="592" width="3" height="17" fill="#800000"/>
<rect x="387" y="582" width="3" height="16" fill="#800000"/>
<rect x="390" y="608" width="4" height="9" fill="#800000"/>
<rect x="393" y="629" width="4" height="3" fill="#800000"/>
<rect x="396" y="590" width="4" height="15" fill="#800000"/>
<rect x="400" y="610" width="3" height="9" fill="#800000"/>
<rect x="403" y="577" width="3" height="22" fill="#800000"/>
<rect x="406" y="611" width="3" height="12" fill="#800000"/>
<rect x="409" y="613" width="3" height="11" fill="#800000"/>
<rect x="412" y="572" width="3" height="18" fill="#800000"/>
<rect x="415" y="645" width="3" height="2" fill="#800000"/>
<rect x="418" y="596" width="3" height="13" fill="#800000"/>
<rect x="421" y="600" width="3" height="11" fill="#800000"/>
<rect x="424" y="601" width="3" height="13" fill="#800000"/>
<rect x="427" y="607" width="3" height="10" fill="#800000"/>
<rect x="430" y="615" width="3" height="7" fill="#800000"/>
<rect x="433" y="581" width="4" height="15" fill="#800000"/>
<rect x="436" y="600" width="4" height="9" fill="#800000"/>
<rect x="439" y="583" width="4" height="18" fill="#800000"/>
<rect x="443" y="614" width="3" height="6" fill="#800000"/>
<rect x="446" y="637" width="3" height="4" fill="#800000"/>
<rect x="449" y="565" width="3" height="12" fill="#800000"/>
<rect x="452" y="584" width="3" height="11" fill="#800000"/>
<rect x="455" y="611" width="3" height="7" fill="#800000"/>
<rect x="458" y="602" width="3" height="10" fill="#800000"/>
<rect x="461" y="605" width="3" height="10" fill="#800000"/>
<rect x="464" y="605" width="3" height="10" fill="#800000"/>
<rect x="467" y="594" width="3" height="15" fill="#800000"/>
<rect x="470" y="608" width="3" height="14" fill="#800000"/>
<rect x="473" y="600" width="3" height="9" fill="#800000"/>
<rect x="476" y="614" width="3" height="7" fill="#800000"/>
<rect x="479" y="607" width="4" height="4" fill="#800000"/>
<rect x="482" y="602" width="4" height="12" fill="#800000"/>
<rect x="486" y="568" width="3" height="22" fill="#800000"/>
<rect x="489" y="610" width="3" height="8" fill="#800000"/>
<rect x="492" y="608" width="3" height="10" fill="#800000"/>
<rect x="495" y="587" width="3" height="15" fill="#800000"/>
<rect x="498" y="582" width="3" height="18" fill="#800000"/>
<rect x="501" y="596" width="3" height="11" fill="#800000"/>
<rect x="504" y="614" width="3" height="4" fill="#800000"/>
<rect x="507" y="565" width="3" height="24" fill="#800000"/>
<rect x="510" y="597" width="3" height="14" fill="#800000"/>
<rect x="513" y="606" width="3" height="9" fill="#800000"/>
<rect x="516" y="605" width="3" height="12" fill="#800000"/>
<rect x="519" y="592" width="3" height="8" fill="#800000"/>
<rect x="522" y="602" width="4" height="11" fill="#800000"/>
<rect x="525" y="489" width="4" height="51" fill="#800000"/>
<rect x="529" y="610" width="3" height="9" fill="#800000"/>
<rect x="532" y="580" width="3" height="18" fill="#800000"/>
<rect x="535" y="624" width="3" height="9" fill="#800000"/>
<rect x="538" y="602" width="3" height="12" fill="#800000"/>
<rect x="541" y="598" width="3" height="11" fill="#800000"/>
<rect x="544" y="579" width="3" height="16" fill="#800000"/>
<rect x="547" y="620" width="3" height="5" fill="#800000"/>
<rect x="550" y="600" width="3" height="12" fill="#800000"/>
<rect x="553" y="602" width="3" height="16" fill="#800000"/>
<rect x="556" y="572" width="3" height="17" fill="#800000"/>
<rect x="559" y="614" width="3" height="7" fill="#800000"/>
<rect x="562" y="588" width="3" height="14" fill="#800000"/>
<rect x="565" y="586" width="4" height="14" fill="#800000"/>
<rect x="568" y="625" width="4" height="3" fill="#800000"/>
<rect x="572" y="576" width="3" height="19" fill="#800000"/>
<rect x="575" y="613" width="3" height="8" fill="#800000"/>
<rect x="578" y="622" width="3" height="7" fill="#800000"/>
<rect x="581" y="582" width="3" height="17" fill="#800000"/>
<rect x="584" y="607" width="3" height="14" fill="#800000"/>
<rect x="587" y="614" width="3" height="7" fill="#800000"/>
<rect x="590" y="594" width="3" height="15" fill="#800000"/>
<rect x="593" y="610" width="3" height="11" fill="#800000"/>
<rect x="596" y="598" width="3" height="13" fill="#800000"/>
<rect x="599" y="585" width="3" height="19" fill="#800000"/>
<rect x="602" y="593" width="3" height="14" fill="#800000"/>
<rect x="605" y="601" width="3" height="9" fill="#800000"/>
<rect x="608" y="600" width="4" height="17" fill="#800000"/>
<rect x="611" y="605" width="4" height="7" fill="#800000"/>
<rect x="615" y="616" width="3" height="9" fill="#800000"/>
<rect x="618" y="593" width="3" height="13" fill="#800000"/>
<rect x="621" y="616" width="3" height="8" fill="#800000"/>
<rect x="624" y="602" width="3" height="17" fill="#800000"/>
<rect x="627" y="615" width="3" height="8" fill="#800000"/>
<rect x="630" y="592" width="3" height="17" fill="#800000"/>
<rect x="633" y="611" width="3" height="8" fill="#800000"/>
<rect x="636" y="599" width="3" height="6" fill="#800000"/>
<rect x="639" y="595" width="3" height="10" fill="#800000"/>
<rect x="642" y="603" width="3" height="8" fill="#800000"/>
<rect x="645" y="593" width="3" height="13" fill="#800000"/>
<rect x="648" y="595" width="3" height="14" fill="#800000"/>
<rect x="651" y="602" width="4" height="14" fill="#800000"/>
<rect x="654" y="598" width="4" height="11" fill="#800000"/>
<rect x="658" y="598" width="3" height="18" fill="#800000"/>
<rect x="661" y="618" width="3" height="3" fill="#800000"/>
<rect x="664" y="603" width="3" height="11" fill="#800000"/>
<rect x="667" y="615" width="3" height="8" fill="#800000"/>
<rect x="670" y="580" width="3" height="25" fill="#800000"/>
<rect x="673" y="585" width="3" height="24" fill="#800000"/>
<rect x="676" y="628" width="3" height="4" fill="#800000"/>
<rect x="679" y="611" width="3" height="12" fill="#800000"/>
<rect x="682" y="601" width="3" height="13" fill="#800000"/>
<rect x="685" y="577" width="3" height="14" fill="#800000"/>
<rect x="688" y="589" width="3" height="13" fill="#800000"/>
<rect x="691" y="611" width="3" height="10" fill="#800000"/>
<rect x="694" y="597" width="4" height="10" fill="#800000"/>
<rect x="697" y="614" width="4" height="9" fill="#800000"/>
<rect x="701" y="596" width="3" height="13" fill="#800000"/>
<rect x="704" y="609" width="3" height="9" fill="#800000"/>
<rect x="707" y="566" width="3" height="25" fill="#800000"/>
<rect x="710" y="583" width="3" height="11" fill="#800000"/>
<rect x="713" y="628" width="3" height="7" fill="#800000"/>
<rect x="716" y="598" width="3" height="11" fill="#800000"/>
<rect x="719" y="588" width="3" height="14" fill="#800000"/>
<rect x="722" y="614" width="3" height="12" fill="#800000"/>
<rect x="725" y="588" width="3" height="14" fill="#800000"/>
<rect x="728" y="568" width="3" height="14" fill="#800000"/>
<rect x="731" y="628" width="3" height="6" fill="#800000"/>
<rect x="734" y="616" width="3" height="6" fill="#800000"/>
<rect x="737" y="555" width="4" height="26" fill="#800000"/>
<rect x="740" y="616" width="4" height="9" fill="#800000"/>
<rect x="743" y="607" width="4" height="9" fill="#800000"/>
<rect x="747" y="605" width="3" height="13" fill="#800000"/>
<rect x="750" y="583" width="3" height="12" fill="#800000"/>
<rect x="753" y="616" width="3" height="7" fill="#800000"/>
<rect x="756" y="623" width="3" height="6" fill="#800000"/>
<rect x="759" y="598" width="3" height="9" fill="#800000"/>
<rect x="762" y="608" width="3" height="11" fill="#800000"/>
<rect x="765" y="584" width="3" height="17" fill="#800000"/>
<rect x="768" y="639" width="3" height="1" fill="#800000"/>
<rect x="771" y="606" width="3" height="10" fill="#800000"/>
<rect x="774" y="572" width="3" height="27" fill="#800000"/>
<rect x="777" y="572" width="3" height="20" fill="#800000"/>
<rect x="780" y="628" width="4" height="4" fill="#800000"/>
<rect x="783" y="613" width="4" height="10" fill="#800000"/>
<rect x="786" y="617" width="4" height="6" fill="#800000"/>
<rect x="790" y="607" width="3" height="8" fill="#800000"/>
<rect x="793" y="619" width="3" height="9" fill="#800000"/>
<rect x="796" y="612" width="3" height="6" fill="#800000"/>
<rect x="799" y="623" width="3" height="4" fill="#800000"/>
<rect x="802" y="618" width="3" height="5" fill="#800000"/>
<rect x="805" y="596" width="3" height="15" fill="#800000"/>
<rect x="808" y="618" width="3" height="10" fill="#800000"/>
<rect x="811" y="616" width="3" height="5" fill="#800000"/>
<rect x="814" y="521" width="3" height="28" fill="#800000"/>
<rect x="817" y="599" width="3" height="10" fill="#800000"/>
<rect x="820" y="584" width="3" height="17" fill="#800000"/>
<rect x="823" y="575" width="4" height="18" fill="#800000"/>
<rect x="826" y="604" width="4" height="10" fill="#800000"/>
<rect x="829" y="593" width="4" height="14" fill="#800000"/>
<rect x="833" y="621" width="3" height="5" fill="#800000"/>
<rect x="836" y="606" width="3" height="10" fill="#800000"/>
<rect x="839" y="606" width="3" height="10" fill="#800000"/>
<rect x="842" y="600" width="3" height="13" fill="#800000"/>
<rect x="845" y="572" width="3" height="18" fill="#800000"/>
<rect x="848" y="588" width="3" height="12" fill="#800000"/>
<rect x="851" y="636" width="3" height="3" fill="#800000"/>
<rect x="854" y="614" width="3" height="9" fill="#800000"/>
<rect x="857" y="623" width="3" height="7" fill="#800000"/>
<rect x="860" y="601" width="3" height="9" fill="#800000"/>
<rect x="863" y="616" width="3" height="9" fill="#800000"/>
<rect x="866" y="610" width="4" height="13" fill="#800000"/>
<rect x="869" y="599" width="4" height="9" fill="#800000"/>
<rect x="872" y="563" width="4" height="17" fill="#800000"/>
<rect x="876" y="622" width="3" height="6" fill="#800000"/>
<rect x="879" y="624" width="3" height="4" fill="#800000"/>
<rect x="882" y="585" width="3" height="19" fill="#800000"/>
<rect x="885" y="604" width="3" height="13" fill="#800000"/>
<rect x="888" y="608" width="3" height="8" fill="#800000"/>
<rect x="891" y="611" width="3" height="10" fill="#800000"/>
<rect x="894" y="606" width="3" height="11" fill="#800000"/>
<rect x="897" y="604" width="3" height="12" fill="#800000"/>
<rect x="900" y="586" width="3" height="16" fill="#800000"/>
<rect x="903" y="642" width="3" height="2" fill="#800000"/>
<rect x="906" y="579" width="3" height="19" fill="#800000"/>
<rect x="909" y="627" width="4" height="5" fill="#800000"/>
<rect x="912" y="605" width="4" height="8" fill="#800000"/>
<rect x="915" y="585" width="4" height="14" fill="#800000"/>
<rect x="919" y="613" width="3" height="4" fill="#800000"/>
<rect x="922" y="573" width="3" height="22" fill="#800000"/>
<rect x="925" y="604" width="3" height="16" fill="#800000"/>
<rect x="928" y="606" width="3" height="13" fill="#800000"/>
<rect x="931" y="606" width="3" height="14" fill="#800000"/>
<rect x="934" y="633" width="3" height="3" fill="#800000"/>
<rect x="937" y="608" width="3" height="11" fill="#800000"/>
<rect x="68" y="570" width="3" height="11" fill="#50ff50"/>
<rect x="71" y="579" width="3" height="7" fill="#50ff50"/>
<rect x="74" y="600" width="3" height="7" fill="#50ff50"/>
<rect x="77" y="607" width="3" height="5" fill="#50ff50"/>
<rect x="80" y="612" width="3" height="8" fill="#50ff50"/>
<rect x="83" y="567" width="3" height="11" fill="#50ff50"/>
<rect x="86" y="603" width="3" height="4" fill="#50ff50"/>
<rect x="89" y="599" width="4" height="4" fill="#50ff50"/>
<rect x="92" y="615" width="4" height="4" fill="#50ff50"/>
<rect x="96" y="612" width="3" height="6" fill="#50ff50"/>
<rect x="99" y="592" width="3" height="4" fill="#50ff50"/>
<rect x="102" y="598" width="3" height="6" fill="#50ff50"/>
<rect x="105" y="595" width="3" height="6" fill="#50ff50"/>
<rect x="108" y="614" width="3" height="2" fill="#50ff50"/>
<rect x="111" y="589" width="3" height="5" fill="#50ff50"/>
<rect x="114" y="607" width="3" height="2" fill="#50ff50"/>
<rect x="117" y="598" width="3" height="5" fill="#50ff50"/>
<rect x="120" y="608" width="3" height="4" fill="#50ff50"/>
<rect x="123" y="587" width="3" height="5" fill="#50ff50"/>
<rect x="126" y="622" width="3" height="4" fill="#50ff50"/>
<rect x="129" y="603" width="3" height="4" fill="#50ff50"/>
<rect x="132" y="593" width="4" height="3" fill="#50ff50"/>
<rect x="135" y="579" width="4" height="10" fill="#50ff50"/>
<rect x="139" y="609" width="3" height="6" fill="#50ff50"/>
<rect x="142" y="642" width="3" height="1" fill="#50ff50"/>
<rect x="145" y="604" width="3" height="3" fill="#50ff50"/>
<rect x="148" y="614" width="3" height="4" fill="#50ff50"/>
<rect x="151" y="590" width="3" height="6" fill="#50ff50"/>
<rect x="154" y="588" width="3" height="6" fill="#50ff50"/>
<rect x="157" y="604" width="3" height="4" fill="#50ff50"/>
<rect x="160" y="603" width="3" height="4" fill="#50ff50"/>
<rect x="163" y="602" width="3" height="5" fill="#50ff50"/>
<rect x="166" y="605" width="3" height="7" fill="#50ff50"/>
<rect x="169" y="593" width="3" height="6" fill="#50ff50"/>
<rect x="172" y="585" width="3" height="9" fill="#50ff50"/>
<rect x="175" y="600" width="4" height="5" fill="#50ff50"/>
<rect x="178" y="601" width="4" height="3" fill="#50ff50"/>
<rect x="182" y="587" width="3" height="8" fill="#50ff50"/>
<rect x="185" y="562" width="3" height="7" fill="#50ff50"/>
<rect x="188" y="584" width="3" height="7" fill="#50ff50"/>
<rect x="191" y="602" width="3" height="5" fill="#50ff50"/>
<rect x="194" y="601" width="3" height="4" fill="#50ff50"/>
<rect x="197" y="597" width="3" height="7" fill="#50ff50"/>
<rect x="200" y="599" width="3" height="7" fill="#50ff50"/>
<rect x="203" y="624" width="3" height="1" fill="#50ff50"/>
<rect x="206" y="613" width="3" height="7" fill="#50ff50"/>
<rect x="209" y="606" width="3" height="4" fill="#50ff50"/>
<rect x="212" y="590" width="3" height="4" fill="#50ff50"/>
<rect x="215" y="613" width="3" height="9" fill="#50ff50"/>
<rect x="218" y="571" width="4" height="11" fill="#50ff50"/>
<rect x="221" y="595" width="4" height="8" fill="#50ff50"/>
<rect x="225" y="593" width="3" height="6" fill="#50ff50"/>
<rect x="228" y="586" width="3" height="8" fill="#50ff50"/>
<rect x="231" y="578" width="3" height="5" fill="#50ff50"/>
<rect x="234" y="598" width="3" height="7" fill="#50ff50"/>
<rect x="237" y="600" width="3" height="4" fill="#50ff50"/>
<rect x="240" y="600" width="3" height="4" fill="#50ff50"/>
<rect x="243" y="593" width="3" height="5" fill="#50ff50"/>
<rect x="246" y="586" width="3" height="11" fill="#50ff50"/>
<rect x="249" y="610" width="3" height="4" fill="#50ff50"/>
<rect x="252" y="595" width="3" height="6" fill="#50ff50"/>
<rect x="255" y="584" width="3" height="5" fill="#50ff50"/>
<rect x="258" y="567" width="3" height="6" fill="#50ff50"/>
<rect x="261" y="588" width="4" height="7" fill="#50ff50"/>
<rect x="264" y="602" width="4" height="3" fill="#50ff50"/>
<rect x="267" y="588" width="4" height="8" fill="#50ff50"/>
<rect x="271" y="603" width="3" height="7" fill="#50ff50"/>
<rect x="274" y="594" width="3" height="5" fill="#50ff50"/>
<rect x="277" y="593" width="3" height="7" fill="#50ff50"/>
<rect x="280" y="610" width="3" height="5" fill="#50ff50"/>
<rect x="283" y="602" width="3" height="3" fill="#50ff50"/>
<rect x="286" y="587" width="3" height="8" fill="#50ff50"/>
<rect x="289" y="606" width="3" height="4" fill="#50ff50"/>
<rect x="292" y="626" width="3" height="4" fill="#50ff50"/>
<rect x="295" y="565" width="3" height="8" fill="#50ff50"/>
<rect x="298" y="583" width="3" height="8" fill="#50ff50"/>
<rect x="301" y="614" width="3" height="5" fill="#50ff50"/>
<rect x="304" y="621" width="4" height="3" fill="#50ff50"/>
<rect x="307" y="612" width="4" height="6" fill="#50ff50"/>
<rect x="310" y="595" width="4" height="5" fill="#50ff50"/>
<rect x="314" y="627" width="3" height="3" fill="#50ff50"/>
<rect x="317" y="568" width="3" height="6" fill="#50ff50"/>
<rect x="320" y="565" width="3" height="8" fill="#50ff50"/>
<rect x="323" y="599" width="3" height="3" fill="#50ff50"/>
<rect x="326" y="607" width="3" height="3" fill="#50ff50"/>
<rect x="329" y="610" width="3" height="5" fill="#50ff50"/>
<rect x="332" y="645" width="3" height="3" fill="#50ff50"/>
<rect x="335" y="595" width="3" height="3" fill="#50ff50"/>
<rect x="338" y="596" width="3" height="4" fill="#50ff50"/>
<rect x="341" y="587" width="3" height="7" fill="#50ff50"/>
<rect x="344" y="599" width="3" height="4" fill="#50ff50"/>
<rect x="347" y="615" width="4" height="3" fill="#50ff50"/>
<rect x="350" y="593" width="4" height="8" fill="#50ff50"/>
<rect x="353" y="579" width="4" height="12" fill="#50ff50"/>
<rect x="357" y="606" width="3" height="5" fill="#50ff50"/>
<rect x="360" y="598" width="3" height="4" fill="#50ff50"/>
<rect x="363" y="595" width="3" height="4" fill="#50ff50"/>
<rect x="366" y="586" width="3" height="2" fill="#50ff50"/>
<rect x="369" y="590" width="3" height="8" fill="#50ff50"/>
<rect x="372" y="598" width="3" height="7" fill="#50ff50"/>
<rect x="375" y="599" width="3" height="5" fill="#50ff50"/>
<rect x="378" y="587" width="3" height="8" fill="#50ff50"/>
<rect x="381" y="585" width="3" height="7" fill="#50ff50"/>
<rect x="384" y="586" width="3" height="6" fill="#50ff50"/>
<rect x="387" y="575" width="3" height="7" fill="#50ff50"/>
<rect x="390" y="603" width="4" height="5" fill="#50ff50"/>
<rect x="393" y="624" width="4" height="5" fill="#50ff50"/>
<rect x="396" y="585" width="4" height="5" fill="#50ff50"/>
<rect x="400" y="605" width="3" height="5" fill="#50ff50"/>
<rect x="403" y="570" width="3" height="7" fill="#50ff50"/>
<rect x="406" y="606" width="3" height="5" fill="#50ff50"/>
<rect x="409" y="605" width="3" height="8" fill="#50ff50"/>
<rect x="412" y="564" width="3" height="8" fill="#50ff50"/>
<rect x="415" y="643" width="3" height="2" fill="#50ff50"/>
<rect x="418" y="590" width="3" height="6" fill="#50ff50"/>
<rect x="421" y="597" width="3" height="3" fill="#50ff50"/>
<rect x="424" y="598" width="3" height="3" fill="#50ff50"/>
<rect x="427" y="603" width="3" height="4" fill="#50ff50"/>
<rect x="430" y="612" width="3" height="3" fill="#50ff50"/>
<rect x="433" y="575" width="4" height="6" fill="#50ff50"/>
<rect x="436" y="595" width="4" height="5" fill="#50ff50"/>
<rect x="439" y="578" width="4" height="5" fill="#50ff50"/>
<rect x="443" y="609" width="3" height="5" fill="#50ff50"/>
<rect x="446" y="636" width="3" height="1" fill="#50ff50"/>
<rect x="449" y="559" width="3" height="6" fill="#50ff50"/>
<rect x="452" y="579" width="3" height="5" fill="#50ff50"/>
<rect x="455" y="607" width="3" height="4" fill="#50ff50"/>
<rect x="458" y="597" width="3" height="5" fill="#50ff50"/>
<rect x="461" y="601" width="3" height="4" fill="#50ff50"/>
<rect x="464" y="598" width="3" height="7" fill="#50ff50"/>
<rect x="467" y="590" width="3" height="4" fill="#50ff50"/>
<rect x="470" y="601" width="3" height="7" fill="#50ff50"/>
<rect x="473" y="597" width="3" height="3" fill="#50ff50"/>
<rect x="476" y="608" width="3" height="6" fill="#50ff50"/>
<rect x="479" y="599" width="4" height="8" fill="#50ff50"/>
<rect x="482" y="598" width="4" height="4" fill="#50ff50"/>
<rect x="486" y="561" width="3" height="7" fill="#50ff50"/>
<rect x="489" y="608" width="3" height="2" fill="#50ff50"/>
<rect x="492" y="604" width="3" height="4" fill="#50ff50"/>
<rect x="495" y="582" width="3" height="5" fill="#50ff50"/>
<rect x="498" y="576" width="3" height="6" fill="#50ff50"/>
<rect x="501" y="590" width="3" height="6" fill="#50ff50"/>
<rect x="504" y="609" width="3" height="5" fill="#50ff50"/>
<rect x="507" y="558" width="3" height="7" fill="#50ff50"/>
<rect x="510" y="592" width="3" height="5" fill="#50ff50"/>
<rect x="513" y="599" width="3" height="7" fill="#50ff50"/>
<rect x="516" y="601" width="3" height="4" fill="#50ff50"/>
<rect x="519" y="589" width="3" height="3" fill="#50ff50"/>
<rect x="522" y="595" width="4" height="7" fill="#50ff50"/>
<rect x="525" y="464" width="4" height="25" fill="#50ff50"/>
<rect x="529" y="608" width="3" height="2" fill="#50ff50"/>
<rect x="532" y="575" width="3" height="5" fill="#50ff50"/>
<rect x="535" y="619" width="3" height="5" fill="#50ff50"/>
<rect x="538" y="599" width="3" height="3" fill="#50ff50"/>
<rect x="541" y="594" width="3" height="4" fill="#50ff50"/>
<rect x="544" y="575" width="3" height="4" fill="#50ff50"/>
<rect x="547" y="615" width="3" height="5" fill="#50ff50"/>
<rect x="550" y="592" width="3" height="8" fill="#50ff50"/>
<rect x="553" y="597" width="3" height="5" fill="#50ff50"/>
<rect x="556" y="563" width="3" height="9" fill="#50ff50"/>
<rect x="559" y="610" width="3" height="4" fill="#50ff50"/>
<rect x="562" y="584" width="3" height="4" fill="#50ff50"/>
<rect x="565" y="580" width="4" height="6" fill="#50ff50"/>
<rect x="568" y="622" width="4" height="3" fill="#50ff50"/>
<rect x="572" y="568" width="3" height="8" fill="#50ff50"/>
<rect x="575" y="608" width="3" height="5" fill="#50ff50"/>
<rect x="578" y="615" width="3" height="7" fill="#50ff50"/>
<rect x="581" y="579" width="3" height="3" fill="#50ff50"/>
<rect x="584" y="603" width="3" height="4" fill="#50ff50"/>
<rect x="587" y="611" width="3" height="3" fill="#50ff50"/>
<rect x="590" y="587" width="3" height="7" fill="#50ff50"/>
<rect x="593" y="604" width="3" height="6" fill="#50ff50"/>
<rect x="596" y="594" width="3" height="4" fill="#50ff50"/>
<rect x="599" y="579" width="3" height="6" fill="#50ff50"/>
<rect x="602" y="585" width="3" height="8" fill="#50ff50"/>
<rect x="605" y="593" width="3" height="8" fill="#50ff50"/>
<rect x="608" y="594" width="4" height="6" fill="#50ff50"/>
<rect x="611" y="601" width="4" height="4" fill="#50ff50"/>
<rect x="615" y="611" width="3" height="5" fill="#50ff50"/>
<rect x="618" y="583" width="3" height="10" fill="#50ff50"/>
<rect x="621" y="611" width="3" height="5" fill="#50ff50"/>
<rect x="624" y="594" width="3" height="8" fill="#50ff50"/>
<rect x="627" y="610" width="3" height="5" fill="#50ff50"/>
<rect x="630" y="585" width="3" height="7" fill="#50ff50"/>
<rect x="633" y="607" width="3" height="4" fill="#50ff50"/>
<rect x="636" y="592" width="3" height="7" fill="#50ff50"/>
<rect x="639" y="592" width="3" height="3" fill="#50ff50"/>
<rect x="642" y="596" width="3" height="7" fill="#50ff50"/>
<rect x="645" y="590" width="3" height="3" fill="#50ff50"/>
<rect x="648" y="591" width="3" height="4" fill="#50ff50"/>
<rect x="651" y="597" width="4" height="5" fill="#50ff50"/>
<rect x="654" y="592" width="4" height="6" fill="#50ff50"/>
<rect x="658" y="594" width="3" height="4" fill="#50ff50"/>
<rect x="661" y="614" width="3" height="4" fill="#50ff50"/>
<rect x="664" y="601" width="3" height="2" fill="#50ff50"/>
<rect x="667" y="610" width="3" height="5" fill="#50ff50"/>
<rect x="670" y="573" width="3" height="7" fill="#50ff50"/>
<rect x="673" y="578" width="3" height="7" fill="#50ff50"/>
<rect x="676" y="625" width="3" height="3" fill="#50ff50"/>
<rect x="679" y="609" width="3" height="2" fill="#50ff50"/>
<rect x="682" y="597" width="3" height="4" fill="#50ff50"/>
<rect x="685" y="571" width="3" height="6" fill="#50ff50"/>
<rect x="688" y="586" width="3" height="3" fill="#50ff50"/>
<rect x="691" y="607" width="3" height="4" fill="#50ff50"/>
<rect x="694" y="592" width="4" height="5" fill="#50ff50"/>
<rect x="697" y="608" width="4" height="6" fill="#50ff50"/>
<rect x="701" y="591" width="3" height="5" fill="#50ff50"/>
<rect x="704" y="606" width="3" height="3" fill="#50ff50"/>
<rect x="707" y="560" width="3" height="6" fill="#50ff50"/>
<rect x="710" y="576" width="3" height="7" fill="#50ff50"/>
<rect x="713" y="627" width="3" height="1" fill="#50ff50"/>
<rect x="716" y="596" width="3" height="2" fill="#50ff50"/>
<rect x="719" y="583" width="3" height="5" fill="#50ff50"/>
<rect x="722" y="610" width="3" height="4" fill="#50ff50"/>
<rect x="725" y="580" width="3" height="8" fill="#50ff50"/>
<rect x="728" y="562" width="3" height="6" fill="#50ff50"/>
<rect x="731" y="623" width="3" height="5" fill="#50ff50"/>
<rect x="734" y="609" width="3" height="7" fill="#50ff50"/>
<rect x="737" y="548" width="4" height="7" fill="#50ff50"/>
<rect x="740" y="613" width="4" height="3" fill="#50ff50"/>
<rect x="743" y="601" width="4" height="6" fill="#50ff50"/>
<rect x="747" y="598" width="3" height="7" fill="#50ff50"/>
<rect x="750" y="576" width="3" height="7" fill="#50ff50"/>
<rect x="753" y="609" width="3" height="7" fill="#50ff50"/>
<rect x="756" y="620" width="3" height="3" fill="#50ff50"/>
<rect x="759" y="592" width="3" height="6" fill="#50ff50"/>
<rect x="762" y="602" width="3" height="6" fill="#50ff50"/>
<rect x="765" y="582" width="3" height="2" fill="#50ff50"/>
<rect x="768" y="637" width="3" height="2" fill="#50ff50"/>
<rect x="771" y="604" width="3" height="2" fill="#50ff50"/>
<rect x="774" y="567" width="3" height="5" fill="#50ff50"/>
<rect x="777" y="564" width="3" height="8" fill="#50ff50"/>
<rect x="780" y="624" width="4" height="4" fill="#50ff50"/>
<rect x="783" y="611" width="4" height="2" fill="#50ff50"/>
<rect x="786" y="612" width="4" height="5" fill="#50ff50"/>
<rect x="790" y="601" width="3" height="6" fill="#50ff50"/>
<rect x="793" y="615" width="3" height="4" fill="#50ff50"/>
<rect x="796" y="606" width="3" height="6" fill="#50ff50"/>
<rect x="799" y="619" width="3" height="4" fill="#50ff50"/>
<rect x="802" y="613" width="3" height="5" fill="#50ff50"/>
<rect x="805" y="588" width="3" height="8" fill="#50ff50"/>
<rect x="808" y="613" width="3" height="5" fill="#50ff50"/>
<rect x="811" y="611" width="3" height="5" fill="#50ff50"/>
<rect x="814" y="512" width="3" height="9" fill="#50ff50"/>
<rect x="817" y="596" width="3" height="3" fill="#50ff50"/>
<rect x="820" y="578" width="3" height="6" fill="#50ff50"/>
<rect x="823" y="563" width="4" height="12" fill="#50ff50"/>
<rect x="826" y="598" width="4" height="6" fill="#50ff50"/>
<rect x="829" y="587" width="4" height="6" fill="#50ff50"/>
<rect x="833" y="615" width="3" height="6" fill="#50ff50"/>
<rect x="836" y="600" width="3" height="6" fill="#50ff50"/>
<rect x="839" y="601" width="3" height="5" fill="#50ff50"/>
<rect x="842" y="596" width="3" height="4" fill="#50ff50"/>
<rect x="845" y="566" width="3" height="6" fill="#50ff50"/>
<rect x="848" y="584" width="3" height="4" fill="#50ff50"/>
<rect x="851" y="631" width="3" height="5" fill="#50ff50"/>
<rect x="854" y="611" width="3" height="3" fill="#50ff50"/>
<rect x="857" y="621" width="3" height="2" fill="#50ff50"/>
<rect x="860" y="598" width="3" height="3" fill="#50ff50"/>
<rect x="863" y="614" width="3" height="2" fill="#50ff50"/>
<rect x="866" y="606" width="4" height="4" fill="#50ff50"/>
<rect x="869" y="595" width="4" height="4" fill="#50ff50"/>
<rect x="872" y="554" width="4" height="9" fill="#50ff50"/>
<rect x="876" y="615" width="3" height="7" fill="#50ff50"/>
<rect x="879" y="619" width="3" height="5" fill="#50ff50"/>
<rect x="882" y="577" width="3" height="8" fill="#50ff50"/>
<rect x="885" y="598" width="3" height="6" fill="#50ff50"/>
<rect x="888" y="605" width="3" height="3" fill="#50ff50"/>
<rect x="891" y="607" width="3" height="4" fill="#50ff50"/>
<rect x="894" y="598" width="3" height="8" fill="#50ff50"/>
<rect x="897" y="597" width="3" height="7" fill="#50ff50"/>
<rect x="900" y="578" width="3" height="8" fill="#50ff50"/>
<rect x="903" y="641" width="3" height="1" fill="#50ff50"/>
<rect x="906" y="570" width="3" height="9" fill="#50ff50"/>
<rect x="909" y="623" width="4" height="4" fill="#50ff50"/>
<rect x="912" y="597" width="4" height="8" fill="#50ff50"/>
<rect x="915" y="579" width="4" height="6" fill="#50ff50"/>
<rect x="919" y="608" width="3" height="5" fill="#50ff50"/>
<rect x="922" y="567" width="3" height="6" fill="#50ff50"/>
<rect x="925" y="598" width="3" height="6" fill="#50ff50"/>
<rect x="928" y="602" width="3" height="4" fill="#50ff50"/>
<rect x="931" y="603" width="3" height="3" fill="#50ff50"/>
<rect x="934" y="631" width="3" height="2" fill="#50ff50"/>
<rect x="937" y="602" width="3" height="6" fill="#50ff50"/>
<rect x="67" y="446" width="875" height="1" fill="#000"/>
<rect x="67" y="648" width="875" height="1" fill="#000"/>
<rect x="67" y="446" width="1" height="203" fill="#000"/>
<rect x="941" y="446" width="1" height="203" fill="#000"/>
</svg>
<svg width="960" height="720" style="position:absolute;left:0;top:0">
<defs><filter id="al" x="0" y="0" width="100%" height="100%" color-interpolation-filters="sRGB"><feComponentTransfer><feFuncA type="discrete" tableValues="0 1"/></feComponentTransfer></filter><filter id="al2" x="0" y="0" width="100%" height="100%" color-interpolation-filters="sRGB"><feComponentTransfer><feFuncA type="discrete" tableValues="0 0 1 1 1 1"/></feComponentTransfer></filter></defs>
<g>
<text class="t" x="61.65" y="219.6">0</text>
<text class="t" x="61.65" y="184.6">50</text>
<text class="t" x="61.65" y="149.6">100</text>
<text class="t" x="61.65" y="114.6">150</text>
<text class="t" x="61.65" y="79.6">200</text>
<text class="t" x="61.65" y="44.6">250</text>
<text class="t" x="61.65" y="436.1">0</text>
<text class="t" x="61.65" y="406.665">5</text>
<text class="t" x="61.65" y="376.83">10</text>
<text class="t" x="61.65" y="346.995">15</text>
<text class="t" x="61.65" y="317.16">20</text>
<text class="t" x="61.65" y="287.325">25</text>
<text class="t" x="61.65" y="257.49">30</text>
<text class="t" x="61.65" y="651.6">0</text>
<text class="t" x="61.65" y="609.6">2</text>
<text class="t" x="61.65" y="567.6">4</text>
<text class="t" x="61.65" y="525.6">6</text>
<text class="t" x="61.65" y="483.6">8</text>
<text class="yl" transform="translate(31,116) rotate(-90)"># mutations</text>
<text class="yl" transform="translate(37,333.7) rotate(-90)">Mb sequenced</text>
<text class="yl" transform="translate(43,550) rotate(-90)">mutations / Mb</text>
<text class="lg" x="818.5" y="39.6" style="fill:#50ff50">dbSNP</text>
<text class="lg" x="818.5" y="59.7" style="fill:#800000">silent</text>
<text class="lg" x="818.5" y="79.7" style="fill:#00008f">nonsilent</text>
<text class="xl" transform="translate(74.5,667.9) rotate(-90)">1186</text>
<text class="xl" transform="translate(77.5,667.9) rotate(-90)">0950</text>
<text class="xl" transform="translate(80.5,667.9) rotate(-90)">7104</text>
<text class="xl" transform="translate(83.5,667.9) rotate(-90)">9028</text>
<text class="xl" transform="translate(86.5,667.9) rotate(-90)">3657</text>
<text class="xl" transform="translate(89.5,667.9) rotate(-90)">6499</text>
<text class="xl" transform="translate(92.5,667.9) rotate(-90)">2181</text>
<text class="xl" transform="translate(95.5,667.9) rotate(-90)">1929</text>
<text class="xl" transform="translate(99,667.9) rotate(-90)">1688</text>
<text class="xl" transform="translate(102.5,667.9) rotate(-90)">1596</text>
<text class="xl" transform="translate(105.5,667.9) rotate(-90)">3374</text>
<text class="xl" transform="translate(108.5,667.9) rotate(-90)">7628</text>
<text class="xl" transform="translate(111.5,667.9) rotate(-90)">4070</text>
<text class="xl" transform="translate(114.5,667.9) rotate(-90)">4919</text>
<text class="xl" transform="translate(117.5,667.9) rotate(-90)">4717</text>
<text class="xl" transform="translate(120.5,667.9) rotate(-90)">6850</text>
<text class="xl" transform="translate(123.5,667.9) rotate(-90)">6909</text>
<text class="xl" transform="translate(126.5,667.9) rotate(-90)">5140</text>
<text class="xl" transform="translate(129.5,667.9) rotate(-90)">9501</text>
<text class="xl" transform="translate(132.5,667.9) rotate(-90)">7767</text>
<text class="xl" transform="translate(135.5,667.9) rotate(-90)">7301</text>
<text class="xl" transform="translate(138.5,667.9) rotate(-90)">7564</text>
<text class="xl" transform="translate(142,667.9) rotate(-90)">8088</text>
<text class="xl" transform="translate(145.5,667.9) rotate(-90)">4056</text>
<text class="xl" transform="translate(148.5,667.9) rotate(-90)">2725</text>
<text class="xl" transform="translate(151.5,667.9) rotate(-90)">2243</text>
<text class="xl" transform="translate(154.5,667.9) rotate(-90)">5878</text>
<text class="xl" transform="translate(157.5,667.9) rotate(-90)">2887</text>
<text class="xl" transform="translate(160.5,667.9) rotate(-90)">7945</text>
<text class="xl" transform="translate(163.5,667.9) rotate(-90)">0067</text>
<text class="xl" transform="translate(166.5,667.9) rotate(-90)">9991</text>
<text class="xl" transform="translate(169.5,667.9) rotate(-90)">0884</text>
<text class="xl" transform="translate(172.5,667.9) rotate(-90)">6536</text>
<text class="xl" transform="translate(175.5,667.9) rotate(-90)">1019</text>
<text class="xl" transform="translate(178.5,667.9) rotate(-90)">2659</text>
<text class="xl" transform="translate(182,667.9) rotate(-90)">1677</text>
<text class="xl" transform="translate(185.5,667.9) rotate(-90)">1662</text>
<text class="xl" transform="translate(188.5,667.9) rotate(-90)">3407</text>
<text class="xl" transform="translate(191.5,667.9) rotate(-90)">5691</text>
<text class="xl" transform="translate(194.5,667.9) rotate(-90)">1889</text>
<text class="xl" transform="translate(197.5,667.9) rotate(-90)">5109</text>
<text class="xl" transform="translate(200.5,667.9) rotate(-90)">4337</text>
<text class="xl" transform="translate(203.5,667.9) rotate(-90)">3362</text>
<text class="xl" transform="translate(206.5,667.9) rotate(-90)">0443</text>
<text class="xl" transform="translate(209.5,667.9) rotate(-90)">8493</text>
<text class="xl" transform="translate(212.5,667.9) rotate(-90)">8725</text>
<text class="xl" transform="translate(215.5,667.9) rotate(-90)">3197</text>
<text class="xl" transform="translate(218.5,667.9) rotate(-90)">8480</text>
<text class="xl" transform="translate(221.5,667.9) rotate(-90)">4577</text>
<text class="xl" transform="translate(225,667.9) rotate(-90)">5640</text>
<text class="xl" transform="translate(228.5,667.9) rotate(-90)">3612</text>
<text class="xl" transform="translate(231.5,667.9) rotate(-90)">5533</text>
<text class="xl" transform="translate(234.5,667.9) rotate(-90)">0031</text>
<text class="xl" transform="translate(237.5,667.9) rotate(-90)">6365</text>
<text class="xl" transform="translate(240.5,667.9) rotate(-90)">5447</text>
<text class="xl" transform="translate(243.5,667.9) rotate(-90)">1391</text>
<text class="xl" transform="translate(246.5,667.9) rotate(-90)">2476</text>
<text class="xl" transform="translate(249.5,667.9) rotate(-90)">9762</text>
<text class="xl" transform="translate(252.5,667.9) rotate(-90)">8983</text>
<text class="xl" transform="translate(255.5,667.9) rotate(-90)">8627</text>
<text class="xl" transform="translate(258.5,667.9) rotate(-90)">0458</text>
<text class="xl" transform="translate(261.5,667.9) rotate(-90)">3940</text>
<text class="xl" transform="translate(264.5,667.9) rotate(-90)">6865</text>
<text class="xl" transform="translate(267.5,667.9) rotate(-90)">9557</text>
<text class="xl" transform="translate(270.5,667.9) rotate(-90)">8713</text>
<text class="xl" transform="translate(274,667.9) rotate(-90)">7211</text>
<text class="xl" transform="translate(277.5,667.9) rotate(-90)">2823</text>
<text class="xl" transform="translate(280.5,667.9) rotate(-90)">9117</text>
<text class="xl" transform="translate(283.5,667.9) rotate(-90)">9100</text>
<text class="xl" transform="translate(286.5,667.9) rotate(-90)">4071</text>
<text class="xl" transform="translate(289.5,667.9) rotate(-90)">8318</text>
<text class="xl" transform="translate(292.5,667.9) rotate(-90)">7262</text>
<text class="xl" transform="translate(295.5,667.9) rotate(-90)">8391</text>
<text class="xl" transform="translate(298.5,667.9) rotate(-90)">8737</text>
<text class="xl" transform="translate(301.5,667.9) rotate(-90)">4253</text>
<text class="xl" transform="translate(304.5,667.9) rotate(-90)">6826</text>
<text class="xl" transform="translate(307.5,667.9) rotate(-90)">1188</text>
<text class="xl" transform="translate(310.5,667.9) rotate(-90)">4960</text>
<text class="xl" transform="translate(313.5,667.9) rotate(-90)">4146</text>
<text class="xl" transform="translate(317,667.9) rotate(-90)">6525</text>
<text class="xl" transform="translate(320.5,667.9) rotate(-90)">7070</text>
<text class="xl" transform="translate(323.5,667.9) rotate(-90)">3207</text>
<text class="xl" transform="translate(326.5,667.9) rotate(-90)">0319</text>
<text class="xl" transform="translate(329.5,667.9) rotate(-90)">0296</text>
<text class="xl" transform="translate(332.5,667.9) rotate(-90)">4840</text>
<text class="xl" transform="translate(335.5,667.9) rotate(-90)">1716</text>
<text class="xl" transform="translate(338.5,667.9) rotate(-90)">2974</text>
<text class="xl" transform="translate(341.5,667.9) rotate(-90)">6651</text>
<text class="xl" transform="translate(344.5,667.9) rotate(-90)">8103</text>
<text class="xl" transform="translate(347.5,667.9) rotate(-90)">3003</text>
<text class="xl" transform="translate(350.5,667.9) rotate(-90)">1451</text>
<text class="xl" transform="translate(353.5,667.9) rotate(-90)">1091</text>
<text class="xl" transform="translate(356.5,667.9) rotate(-90)">5556</text>
<text class="xl" transform="translate(360,667.9) rotate(-90)">2117</text>
<text class="xl" transform="translate(363.5,667.9) rotate(-90)">2645</text>
<text class="xl" transform="translate(366.5,667.9) rotate(-90)">5111</text>
<text class="xl" transform="translate(369.5,667.9) rotate(-90)">7302</text>
<text class="xl" transform="translate(372.5,667.9) rotate(-90)">0297</text>
<text class="xl" transform="translate(375.5,667.9) rotate(-90)">8284</text>
<text class="xl" transform="translate(378.5,667.9) rotate(-90)">4025</text>
<text class="xl" transform="translate(381.5,667.9) rotate(-90)">8944</text>
<text class="xl" transform="translate(384.5,667.9) rotate(-90)">3761</text>
<text class="xl" transform="translate(387.5,667.9) rotate(-90)">5694</text>
<text class="xl" transform="translate(390.5,667.9) rotate(-90)">4187</text>
<text class="xl" transform="translate(393.5,667.9) rotate(-90)">6240</text>
<text class="xl" transform="translate(396.5,667.9) rotate(-90)">4801</text>
<text class="xl" transform="translate(399.5,667.9) rotate(-90)">4407</text>
<text class="xl" transform="translate(403,667.9) rotate(-90)">5389</text>
<text class="xl" transform="translate(406.5,667.9) rotate(-90)">5071</text>
<text class="xl" transform="translate(409.5,667.9) rotate(-90)">5494</text>
<text class="xl" transform="translate(412.5,667.9) rotate(-90)">8237</text>
<text class="xl" transform="translate(415.5,667.9) rotate(-90)">1488</text>
<text class="xl" transform="translate(418.5,667.9) rotate(-90)">9614</text>
<text class="xl" transform="translate(421.5,667.9) rotate(-90)">4984</text>
<text class="xl" transform="translate(424.5,667.9) rotate(-90)">2543</text>
<text class="xl" transform="translate(427.5,667.9) rotate(-90)">2448</text>
<text class="xl" transform="translate(430.5,667.9) rotate(-90)">8404</text>
<text class="xl" transform="translate(433.5,667.9) rotate(-90)">8263</text>
<text class="xl" transform="translate(436.5,667.9) rotate(-90)">1394</text>
<text class="xl" transform="translate(439.5,667.9) rotate(-90)">1718</text>
<text class="xl" transform="translate(442.5,667.9) rotate(-90)">0308</text>
<text class="xl" transform="translate(446,667.9) rotate(-90)">0054</text>
<text class="xl" transform="translate(449.5,667.9) rotate(-90)">1506</text>
<text class="xl" transform="translate(452.5,667.9) rotate(-90)">1219</text>
<text class="xl" transform="translate(455.5,667.9) rotate(-90)">7542</text>
<text class="xl" transform="translate(458.5,667.9) rotate(-90)">4707</text>
<text class="xl" transform="translate(461.5,667.9) rotate(-90)">9825</text>
<text class="xl" transform="translate(464.5,667.9) rotate(-90)">9302</text>
<text class="xl" transform="translate(467.5,667.9) rotate(-90)">7959</text>
<text class="xl" transform="translate(470.5,667.9) rotate(-90)">4765</text>
<text class="xl" transform="translate(473.5,667.9) rotate(-90)">7640</text>
<text class="xl" transform="translate(476.5,667.9) rotate(-90)">1406</text>
<text class="xl" transform="translate(479.5,667.9) rotate(-90)">1252</text>
<text class="xl" transform="translate(482.5,667.9) rotate(-90)">3437</text>
<text class="xl" transform="translate(485.5,667.9) rotate(-90)">2322</text>
<text class="xl" transform="translate(489,667.9) rotate(-90)">9885</text>
<text class="xl" transform="translate(492.5,667.9) rotate(-90)">3790</text>
<text class="xl" transform="translate(495.5,667.9) rotate(-90)">2606</text>
<text class="xl" transform="translate(498.5,667.9) rotate(-90)">4947</text>
<text class="xl" transform="translate(501.5,667.9) rotate(-90)">5178</text>
<text class="xl" transform="translate(504.5,667.9) rotate(-90)">5542</text>
<text class="xl" transform="translate(507.5,667.9) rotate(-90)">4748</text>
<text class="xl" transform="translate(510.5,667.9) rotate(-90)">6392</text>
<text class="xl" transform="translate(513.5,667.9) rotate(-90)">4508</text>
<text class="xl" transform="translate(516.5,667.9) rotate(-90)">4679</text>
<text class="xl" transform="translate(519.5,667.9) rotate(-90)">8371</text>
<text class="xl" transform="translate(522.5,667.9) rotate(-90)">0475</text>
<text class="xl" transform="translate(525.5,667.9) rotate(-90)">1320</text>
<text class="xl" transform="translate(528.5,667.9) rotate(-90)">2270</text>
<text class="xl" transform="translate(532,667.9) rotate(-90)">2085</text>
<text class="xl" transform="translate(535.5,667.9) rotate(-90)">4616</text>
<text class="xl" transform="translate(538.5,667.9) rotate(-90)">3910</text>
<text class="xl" transform="translate(541.5,667.9) rotate(-90)">1961</text>
<text class="xl" transform="translate(544.5,667.9) rotate(-90)">8201</text>
<text class="xl" transform="translate(547.5,667.9) rotate(-90)">5453</text>
<text class="xl" transform="translate(550.5,667.9) rotate(-90)">3152</text>
<text class="xl" transform="translate(553.5,667.9) rotate(-90)">9107</text>
<text class="xl" transform="translate(556.5,667.9) rotate(-90)">4232</text>
<text class="xl" transform="translate(559.5,667.9) rotate(-90)">6272</text>
<text class="xl" transform="translate(562.5,667.9) rotate(-90)">4427</text>
<text class="xl" transform="translate(565.5,667.9) rotate(-90)">9409</text>
<text class="xl" transform="translate(568.5,667.9) rotate(-90)">3538</text>
<text class="xl" transform="translate(571.5,667.9) rotate(-90)">6549</text>
<text class="xl" transform="translate(575,667.9) rotate(-90)">2084</text>
<text class="xl" transform="translate(578.5,667.9) rotate(-90)">8025</text>
<text class="xl" transform="translate(581.5,667.9) rotate(-90)">7670</text>
<text class="xl" transform="translate(584.5,667.9) rotate(-90)">2529</text>
<text class="xl" transform="translate(587.5,667.9) rotate(-90)">1392</text>
<text class="xl" transform="translate(590.5,667.9) rotate(-90)">3810</text>
<text class="xl" transform="translate(593.5,667.9) rotate(-90)">4125</text>
<text class="xl" transform="translate(596.5,667.9) rotate(-90)">1152</text>
<text class="xl" transform="translate(599.5,667.9) rotate(-90)">6358</text>
<text class="xl" transform="translate(602.5,667.9) rotate(-90)">0171</text>
<text class="xl" transform="translate(605.5,667.9) rotate(-90)">5183</text>
<text class="xl" transform="translate(608.5,667.9) rotate(-90)">8962</text>
<text class="xl" transform="translate(611.5,667.9) rotate(-90)">0906</text>
<text class="xl" transform="translate(615,667.9) rotate(-90)">1328</text>
<text class="xl" transform="translate(618.5,667.9) rotate(-90)">3715</text>
<text class="xl" transform="translate(621.5,667.9) rotate(-90)">5936</text>
<text class="xl" transform="translate(624.5,667.9) rotate(-90)">8271</text>
<text class="xl" transform="translate(627.5,667.9) rotate(-90)">5107</text>
<text class="xl" transform="translate(630.5,667.9) rotate(-90)">4342</text>
<text class="xl" transform="translate(633.5,667.9) rotate(-90)">9995</text>
<text class="xl" transform="translate(636.5,667.9) rotate(-90)">0924</text>
<text class="xl" transform="translate(639.5,667.9) rotate(-90)">3488</text>
<text class="xl" transform="translate(642.5,667.9) rotate(-90)">0849</text>
<text class="xl" transform="translate(645.5,667.9) rotate(-90)">5147</text>
<text class="xl" transform="translate(648.5,667.9) rotate(-90)">3124</text>
<text class="xl" transform="translate(651.5,667.9) rotate(-90)">5108</text>
<text class="xl" transform="translate(654.5,667.9) rotate(-90)">2773</text>
<text class="xl" transform="translate(657.5,667.9) rotate(-90)">1323</text>
<text class="xl" transform="translate(661,667.9) rotate(-90)">3398</text>
<text class="xl" transform="translate(664.5,667.9) rotate(-90)">1437</text>
<text class="xl" transform="translate(667.5,667.9) rotate(-90)">8872</text>
<text class="xl" transform="translate(670.5,667.9) rotate(-90)">7774</text>
<text class="xl" transform="translate(673.5,667.9) rotate(-90)">0666</text>
<text class="xl" transform="translate(676.5,667.9) rotate(-90)">1015</text>
<text class="xl" transform="translate(679.5,667.9) rotate(-90)">5555</text>
<text class="xl" transform="translate(682.5,667.9) rotate(-90)">0714</text>
<text class="xl" transform="translate(685.5,667.9) rotate(-90)">0061</text>
<text class="xl" transform="translate(688.5,667.9) rotate(-90)">1757</text>
<text class="xl" transform="translate(691.5,667.9) rotate(-90)">7044</text>
<text class="xl" transform="translate(694.5,667.9) rotate(-90)">0142</text>
<text class="xl" transform="translate(697.5,667.9) rotate(-90)">5370</text>
<text class="xl" transform="translate(700.5,667.9) rotate(-90)">1294</text>
<text class="xl" transform="translate(704,667.9) rotate(-90)">4051</text>
<text class="xl" transform="translate(707.5,667.9) rotate(-90)">9053</text>
<text class="xl" transform="translate(710.5,667.9) rotate(-90)">1723</text>
<text class="xl" transform="translate(713.5,667.9) rotate(-90)">3413</text>
<text class="xl" transform="translate(716.5,667.9) rotate(-90)">2837</text>
<text class="xl" transform="translate(719.5,667.9) rotate(-90)">3849</text>
<text class="xl" transform="translate(722.5,667.9) rotate(-90)">4577</text>
<text class="xl" transform="translate(725.5,667.9) rotate(-90)">4265</text>
<text class="xl" transform="translate(728.5,667.9) rotate(-90)">4019</text>
<text class="xl" transform="translate(731.5,667.9) rotate(-90)">3084</text>
<text class="xl" transform="translate(734.5,667.9) rotate(-90)">4029</text>
<text class="xl" transform="translate(737.5,667.9) rotate(-90)">7600</text>
<text class="xl" transform="translate(740.5,667.9) rotate(-90)">3786</text>
<text class="xl" transform="translate(743.5,667.9) rotate(-90)">3815</text>
<text class="xl" transform="translate(746.5,667.9) rotate(-90)">9555</text>
<text class="xl" transform="translate(750,667.9) rotate(-90)">2912</text>
<text class="xl" transform="translate(753.5,667.9) rotate(-90)">1733</text>
<text class="xl" transform="translate(756.5,667.9) rotate(-90)">0613</text>
<text class="xl" transform="translate(759.5,667.9) rotate(-90)">3341</text>
<text class="xl" transform="translate(762.5,667.9) rotate(-90)">0186</text>
<text class="xl" transform="translate(765.5,667.9) rotate(-90)">5115</text>
<text class="xl" transform="translate(768.5,667.9) rotate(-90)">8979</text>
<text class="xl" transform="translate(771.5,667.9) rotate(-90)">6476</text>
<text class="xl" transform="translate(774.5,667.9) rotate(-90)">2681</text>
<text class="xl" transform="translate(777.5,667.9) rotate(-90)">5039</text>
<text class="xl" transform="translate(780.5,667.9) rotate(-90)">5852</text>
<text class="xl" transform="translate(783.5,667.9) rotate(-90)">3230</text>
<text class="xl" transform="translate(786.5,667.9) rotate(-90)">7113</text>
<text class="xl" transform="translate(789.5,667.9) rotate(-90)">6655</text>
<text class="xl" transform="translate(793,667.9) rotate(-90)">2129</text>
<text class="xl" transform="translate(796.5,667.9) rotate(-90)">6499</text>
<text class="xl" transform="translate(799.5,667.9) rotate(-90)">8265</text>
<text class="xl" transform="translate(802.5,667.9) rotate(-90)">2651</text>
<text class="xl" transform="translate(805.5,667.9) rotate(-90)">6287</text>
<text class="xl" transform="translate(808.5,667.9) rotate(-90)">0712</text>
<text class="xl" transform="translate(811.5,667.9) rotate(-90)">6355</text>
<text class="xl" transform="translate(814.5,667.9) rotate(-90)">6627</text>
<text class="xl" transform="translate(817.5,667.9) rotate(-90)">9263</text>
<text class="xl" transform="translate(820.5,667.9) rotate(-90)">2563</text>
<text class="xl" transform="translate(823.5,667.9) rotate(-90)">4047</text>
<text class="xl" transform="translate(826.5,667.9) rotate(-90)">5311</text>
<text class="xl" transform="translate(829.5,667.9) rotate(-90)">9012</text>
<text class="xl" transform="translate(832.5,667.9) rotate(-90)">4083</text>
<text class="xl" transform="translate(836,667.9) rotate(-90)">8250</text>
<text class="xl" transform="translate(839.5,667.9) rotate(-90)">8019</text>
<text class="xl" transform="translate(842.5,667.9) rotate(-90)">7508</text>
<text class="xl" transform="translate(845.5,667.9) rotate(-90)">1099</text>
<text class="xl" transform="translate(848.5,667.9) rotate(-90)">1502</text>
<text class="xl" transform="translate(851.5,667.9) rotate(-90)">0666</text>
<text class="xl" transform="translate(854.5,667.9) rotate(-90)">1310</text>
<text class="xl" transform="translate(857.5,667.9) rotate(-90)">0423</text>
<text class="xl" transform="translate(860.5,667.9) rotate(-90)">2156</text>
<text class="xl" transform="translate(863.5,667.9) rotate(-90)">1073</text>
<text class="xl" transform="translate(866.5,667.9) rotate(-90)">5305</text>
<text class="xl" transform="translate(869.5,667.9) rotate(-90)">4164</text>
<text class="xl" transform="translate(872.5,667.9) rotate(-90)">4306</text>
<text class="xl" transform="translate(875.5,667.9) rotate(-90)">6099</text>
<text class="xl" transform="translate(879,667.9) rotate(-90)">2641</text>
<text class="xl" transform="translate(882.5,667.9) rotate(-90)">4330</text>
<text class="xl" transform="translate(885.5,667.9) rotate(-90)">7422</text>
<text class="xl" transform="translate(888.5,667.9) rotate(-90)">4129</text>
<text class="xl" transform="translate(891.5,667.9) rotate(-90)">6156</text>
<text class="xl" transform="translate(894.5,667.9) rotate(-90)">5420</text>
<text class="xl" transform="translate(897.5,667.9) rotate(-90)">0791</text>
<text class="xl" transform="translate(900.5,667.9) rotate(-90)">9598</text>
<text class="xl" transform="translate(903.5,667.9) rotate(-90)">2447</text>
<text class="xl" transform="translate(906.5,667.9) rotate(-90)">8399</text>
<text class="xl" transform="translate(909.5,667.9) rotate(-90)">3723</text>
<text class="xl" transform="translate(912.5,667.9) rotate(-90)">0042</text>
<text class="xl" transform="translate(915.5,667.9) rotate(-90)">8570</text>
<text class="xl" transform="translate(918.5,667.9) rotate(-90)">9561</text>
<text class="xl" transform="translate(922,667.9) rotate(-90)">6000</text>
<text class="xl" transform="translate(925.5,667.9) rotate(-90)">0231</text>
<text class="xl" transform="translate(928.5,667.9) rotate(-90)">1043</text>
<text class="xl" transform="translate(931.5,667.9) rotate(-90)">0188</text>
<text class="xl" transform="translate(934.5,667.9) rotate(-90)">9477</text>
<text class="xl" transform="translate(937.5,667.9) rotate(-90)">4071</text>
<text class="xl" transform="translate(940.5,667.9) rotate(-90)">8708</text>
<text class="xl" transform="translate(943.5,667.9) rotate(-90)">2608</text>
</g></svg></body></html>
